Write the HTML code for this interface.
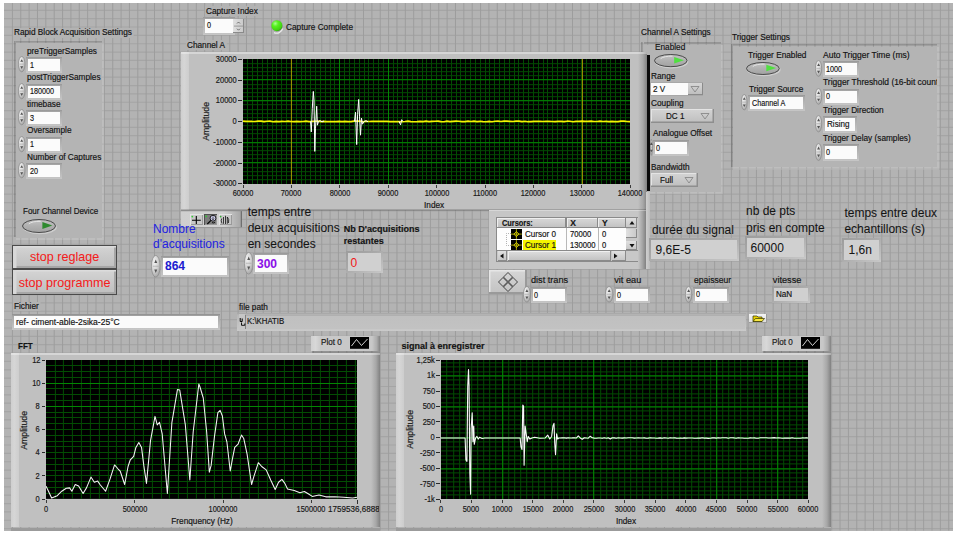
<!DOCTYPE html>
<html><head><meta charset="utf-8"><style>
html,body{margin:0;padding:0;background:#fff;width:956px;height:534px;overflow:hidden;font-family:"Liberation Sans", sans-serif;}
div{-webkit-text-stroke:0.18px currentColor;}
.big{-webkit-text-stroke:0.05px currentColor !important;}
</style></head><body>
<div style="position:absolute;left:4.00px;top:3.00px;width:949.00px;height:527.60px;background:#b3b3b3;overflow:hidden"><svg width="949" height="527.6" style="position:absolute;left:0;top:0"><g stroke="#a5a5a5" stroke-width="1.2"><line x1="0" y1="7.30" x2="949" y2="7.30"/><line x1="0" y1="15.66" x2="949" y2="15.66"/><line x1="0" y1="24.02" x2="949" y2="24.02"/><line x1="0" y1="32.38" x2="949" y2="32.38"/><line x1="0" y1="40.74" x2="949" y2="40.74"/><line x1="0" y1="49.10" x2="949" y2="49.10"/><line x1="0" y1="57.46" x2="949" y2="57.46"/><line x1="0" y1="65.82" x2="949" y2="65.82"/><line x1="0" y1="74.18" x2="949" y2="74.18"/><line x1="0" y1="82.54" x2="949" y2="82.54"/><line x1="0" y1="90.90" x2="949" y2="90.90"/><line x1="0" y1="99.26" x2="949" y2="99.26"/><line x1="0" y1="107.62" x2="949" y2="107.62"/><line x1="0" y1="115.98" x2="949" y2="115.98"/><line x1="0" y1="124.34" x2="949" y2="124.34"/><line x1="0" y1="132.70" x2="949" y2="132.70"/><line x1="0" y1="141.06" x2="949" y2="141.06"/><line x1="0" y1="149.42" x2="949" y2="149.42"/><line x1="0" y1="157.78" x2="949" y2="157.78"/><line x1="0" y1="166.14" x2="949" y2="166.14"/><line x1="0" y1="174.50" x2="949" y2="174.50"/><line x1="0" y1="182.86" x2="949" y2="182.86"/><line x1="0" y1="191.22" x2="949" y2="191.22"/><line x1="0" y1="199.58" x2="949" y2="199.58"/><line x1="0" y1="207.94" x2="949" y2="207.94"/><line x1="0" y1="216.30" x2="949" y2="216.30"/><line x1="0" y1="224.66" x2="949" y2="224.66"/><line x1="0" y1="233.02" x2="949" y2="233.02"/><line x1="0" y1="241.38" x2="949" y2="241.38"/><line x1="0" y1="249.74" x2="949" y2="249.74"/><line x1="0" y1="258.10" x2="949" y2="258.10"/><line x1="0" y1="266.46" x2="949" y2="266.46"/><line x1="0" y1="274.82" x2="949" y2="274.82"/><line x1="0" y1="283.18" x2="949" y2="283.18"/><line x1="0" y1="291.54" x2="949" y2="291.54"/><line x1="0" y1="299.90" x2="949" y2="299.90"/><line x1="0" y1="308.26" x2="949" y2="308.26"/><line x1="0" y1="316.62" x2="949" y2="316.62"/><line x1="0" y1="324.98" x2="949" y2="324.98"/><line x1="0" y1="333.34" x2="949" y2="333.34"/><line x1="0" y1="341.70" x2="949" y2="341.70"/><line x1="0" y1="350.06" x2="949" y2="350.06"/><line x1="0" y1="358.42" x2="949" y2="358.42"/><line x1="0" y1="366.78" x2="949" y2="366.78"/><line x1="0" y1="375.14" x2="949" y2="375.14"/><line x1="0" y1="383.50" x2="949" y2="383.50"/><line x1="0" y1="391.86" x2="949" y2="391.86"/><line x1="0" y1="400.22" x2="949" y2="400.22"/><line x1="0" y1="408.58" x2="949" y2="408.58"/><line x1="0" y1="416.94" x2="949" y2="416.94"/><line x1="0" y1="425.30" x2="949" y2="425.30"/><line x1="0" y1="433.66" x2="949" y2="433.66"/><line x1="0" y1="442.02" x2="949" y2="442.02"/><line x1="0" y1="450.38" x2="949" y2="450.38"/><line x1="0" y1="458.74" x2="949" y2="458.74"/><line x1="0" y1="467.10" x2="949" y2="467.10"/><line x1="0" y1="475.46" x2="949" y2="475.46"/><line x1="0" y1="483.82" x2="949" y2="483.82"/><line x1="0" y1="492.18" x2="949" y2="492.18"/><line x1="0" y1="500.54" x2="949" y2="500.54"/><line x1="0" y1="508.90" x2="949" y2="508.90"/><line x1="0" y1="517.26" x2="949" y2="517.26"/><line x1="0" y1="525.62" x2="949" y2="525.62"/></g><g stroke="#9d9d9d" stroke-width="1"><line x1="8.40" y1="0" x2="8.40" y2="527.6"/><line x1="16.76" y1="0" x2="16.76" y2="527.6"/><line x1="25.12" y1="0" x2="25.12" y2="527.6"/><line x1="33.48" y1="0" x2="33.48" y2="527.6"/><line x1="41.84" y1="0" x2="41.84" y2="527.6"/><line x1="50.20" y1="0" x2="50.20" y2="527.6"/><line x1="58.56" y1="0" x2="58.56" y2="527.6"/><line x1="66.92" y1="0" x2="66.92" y2="527.6"/><line x1="75.28" y1="0" x2="75.28" y2="527.6"/><line x1="83.64" y1="0" x2="83.64" y2="527.6"/><line x1="92.00" y1="0" x2="92.00" y2="527.6"/><line x1="100.36" y1="0" x2="100.36" y2="527.6"/><line x1="108.72" y1="0" x2="108.72" y2="527.6"/><line x1="117.08" y1="0" x2="117.08" y2="527.6"/><line x1="125.44" y1="0" x2="125.44" y2="527.6"/><line x1="133.80" y1="0" x2="133.80" y2="527.6"/><line x1="142.16" y1="0" x2="142.16" y2="527.6"/><line x1="150.52" y1="0" x2="150.52" y2="527.6"/><line x1="158.88" y1="0" x2="158.88" y2="527.6"/><line x1="167.24" y1="0" x2="167.24" y2="527.6"/><line x1="175.60" y1="0" x2="175.60" y2="527.6"/><line x1="183.96" y1="0" x2="183.96" y2="527.6"/><line x1="192.32" y1="0" x2="192.32" y2="527.6"/><line x1="200.68" y1="0" x2="200.68" y2="527.6"/><line x1="209.04" y1="0" x2="209.04" y2="527.6"/><line x1="217.40" y1="0" x2="217.40" y2="527.6"/><line x1="225.76" y1="0" x2="225.76" y2="527.6"/><line x1="234.12" y1="0" x2="234.12" y2="527.6"/><line x1="242.48" y1="0" x2="242.48" y2="527.6"/><line x1="250.84" y1="0" x2="250.84" y2="527.6"/><line x1="259.20" y1="0" x2="259.20" y2="527.6"/><line x1="267.56" y1="0" x2="267.56" y2="527.6"/><line x1="275.92" y1="0" x2="275.92" y2="527.6"/><line x1="284.28" y1="0" x2="284.28" y2="527.6"/><line x1="292.64" y1="0" x2="292.64" y2="527.6"/><line x1="301.00" y1="0" x2="301.00" y2="527.6"/><line x1="309.36" y1="0" x2="309.36" y2="527.6"/><line x1="317.72" y1="0" x2="317.72" y2="527.6"/><line x1="326.08" y1="0" x2="326.08" y2="527.6"/><line x1="334.44" y1="0" x2="334.44" y2="527.6"/><line x1="342.80" y1="0" x2="342.80" y2="527.6"/><line x1="351.16" y1="0" x2="351.16" y2="527.6"/><line x1="359.52" y1="0" x2="359.52" y2="527.6"/><line x1="367.88" y1="0" x2="367.88" y2="527.6"/><line x1="376.24" y1="0" x2="376.24" y2="527.6"/><line x1="384.60" y1="0" x2="384.60" y2="527.6"/><line x1="392.96" y1="0" x2="392.96" y2="527.6"/><line x1="401.32" y1="0" x2="401.32" y2="527.6"/><line x1="409.68" y1="0" x2="409.68" y2="527.6"/><line x1="418.04" y1="0" x2="418.04" y2="527.6"/><line x1="426.40" y1="0" x2="426.40" y2="527.6"/><line x1="434.76" y1="0" x2="434.76" y2="527.6"/><line x1="443.12" y1="0" x2="443.12" y2="527.6"/><line x1="451.48" y1="0" x2="451.48" y2="527.6"/><line x1="459.84" y1="0" x2="459.84" y2="527.6"/><line x1="468.20" y1="0" x2="468.20" y2="527.6"/><line x1="476.56" y1="0" x2="476.56" y2="527.6"/><line x1="484.92" y1="0" x2="484.92" y2="527.6"/><line x1="493.28" y1="0" x2="493.28" y2="527.6"/><line x1="501.64" y1="0" x2="501.64" y2="527.6"/><line x1="510.00" y1="0" x2="510.00" y2="527.6"/><line x1="518.36" y1="0" x2="518.36" y2="527.6"/><line x1="526.72" y1="0" x2="526.72" y2="527.6"/><line x1="535.08" y1="0" x2="535.08" y2="527.6"/><line x1="543.44" y1="0" x2="543.44" y2="527.6"/><line x1="551.80" y1="0" x2="551.80" y2="527.6"/><line x1="560.16" y1="0" x2="560.16" y2="527.6"/><line x1="568.52" y1="0" x2="568.52" y2="527.6"/><line x1="576.88" y1="0" x2="576.88" y2="527.6"/><line x1="585.24" y1="0" x2="585.24" y2="527.6"/><line x1="593.60" y1="0" x2="593.60" y2="527.6"/><line x1="601.96" y1="0" x2="601.96" y2="527.6"/><line x1="610.32" y1="0" x2="610.32" y2="527.6"/><line x1="618.68" y1="0" x2="618.68" y2="527.6"/><line x1="627.04" y1="0" x2="627.04" y2="527.6"/><line x1="635.40" y1="0" x2="635.40" y2="527.6"/><line x1="643.76" y1="0" x2="643.76" y2="527.6"/><line x1="652.12" y1="0" x2="652.12" y2="527.6"/><line x1="660.48" y1="0" x2="660.48" y2="527.6"/><line x1="668.84" y1="0" x2="668.84" y2="527.6"/><line x1="677.20" y1="0" x2="677.20" y2="527.6"/><line x1="685.56" y1="0" x2="685.56" y2="527.6"/><line x1="693.92" y1="0" x2="693.92" y2="527.6"/><line x1="702.28" y1="0" x2="702.28" y2="527.6"/><line x1="710.64" y1="0" x2="710.64" y2="527.6"/><line x1="719.00" y1="0" x2="719.00" y2="527.6"/><line x1="727.36" y1="0" x2="727.36" y2="527.6"/><line x1="735.72" y1="0" x2="735.72" y2="527.6"/><line x1="744.08" y1="0" x2="744.08" y2="527.6"/><line x1="752.44" y1="0" x2="752.44" y2="527.6"/><line x1="760.80" y1="0" x2="760.80" y2="527.6"/><line x1="769.16" y1="0" x2="769.16" y2="527.6"/><line x1="777.52" y1="0" x2="777.52" y2="527.6"/><line x1="785.88" y1="0" x2="785.88" y2="527.6"/><line x1="794.24" y1="0" x2="794.24" y2="527.6"/><line x1="802.60" y1="0" x2="802.60" y2="527.6"/><line x1="810.96" y1="0" x2="810.96" y2="527.6"/><line x1="819.32" y1="0" x2="819.32" y2="527.6"/><line x1="827.68" y1="0" x2="827.68" y2="527.6"/><line x1="836.04" y1="0" x2="836.04" y2="527.6"/><line x1="844.40" y1="0" x2="844.40" y2="527.6"/><line x1="852.76" y1="0" x2="852.76" y2="527.6"/><line x1="861.12" y1="0" x2="861.12" y2="527.6"/><line x1="869.48" y1="0" x2="869.48" y2="527.6"/><line x1="877.84" y1="0" x2="877.84" y2="527.6"/><line x1="886.20" y1="0" x2="886.20" y2="527.6"/><line x1="894.56" y1="0" x2="894.56" y2="527.6"/><line x1="902.92" y1="0" x2="902.92" y2="527.6"/><line x1="911.28" y1="0" x2="911.28" y2="527.6"/><line x1="919.64" y1="0" x2="919.64" y2="527.6"/><line x1="928.00" y1="0" x2="928.00" y2="527.6"/><line x1="936.36" y1="0" x2="936.36" y2="527.6"/><line x1="944.72" y1="0" x2="944.72" y2="527.6"/></g></svg></div><div style="position:absolute;left:205.70px;top:6.54px;font-size:8.7px;line-height:1;color:#141414;font-weight:400;white-space:nowrap;transform-origin:0 0;transform:scaleX(0.95);background:#b3b3b3;padding:0.5px 1.5px 0.5px 1px;margin:-0.5px 0 0 -1px;">Capture Index</div><div style="position:absolute;left:202.80px;top:16.70px;width:32.40px;height:18.20px;background:linear-gradient(to bottom,#969696,#a9a9a9 2px,#c6c6c6);"></div><div style="position:absolute;left:204.80px;top:18.70px;width:28.40px;height:14.20px;background:#fbfbfb"></div><div style="position:absolute;left:206.50px;top:21.43px;font-size:8.7px;line-height:1;color:#141414;font-weight:400;white-space:nowrap;transform-origin:0 0;transform:scaleX(0.83);">0</div><div style="position:absolute;left:233.20px;top:18.70px;width:10.70px;height:14.20px;background:linear-gradient(to right,#e0e0e0,#c8c8c8);box-shadow:inset -1px -1px 0 #8a8a8a"></div><svg style="position:absolute;left:233px;top:18.7px" width="11" height="15"><line x1="1" y1="7.1" x2="10" y2="7.1" stroke="#8a8a8a" stroke-width="0.8"/><path d="M4 4.5 L5.5 3 L7 4.5" stroke="#555" stroke-width="0.8" fill="none"/><path d="M4 9.7 L5.5 11.2 L7 9.7" stroke="#555" stroke-width="0.8" fill="none"/></svg><svg style="position:absolute;left:269px;top:18px" width="16" height="16"><defs><radialGradient id="led" cx="0.35" cy="0.3" r="0.75"><stop offset="0" stop-color="#a8ff90"/><stop offset="0.35" stop-color="#58f020"/><stop offset="0.85" stop-color="#40d010"/><stop offset="1" stop-color="#2a9010"/></radialGradient></defs><path d="M13.6 10.5 A6.2 6.2 0 0 1 5 14.6" stroke="#f0f0f0" stroke-width="1.3" fill="none" opacity="0.9"/><circle cx="7.9" cy="7.7" r="6.1" fill="#8a8a8a" opacity="0.35"/><circle cx="7.9" cy="7.7" r="5.5" fill="url(#led)"/></svg><div style="position:absolute;left:285.70px;top:22.54px;font-size:8.7px;line-height:1;color:#141414;font-weight:400;white-space:nowrap;transform-origin:0 0;transform:scaleX(0.95);">Capture Complete</div><div style="position:absolute;left:14.20px;top:28.34px;font-size:8.7px;line-height:1;color:#141414;font-weight:400;white-space:nowrap;transform-origin:0 0;transform:scaleX(0.95);background:#b3b3b3;padding:0.5px 1.5px 0.5px 1px;margin:-0.5px 0 0 -1px;">Rapid Block Acquisition Settings</div><div style="position:absolute;left:13.80px;top:40.80px;width:2.20px;height:196.70px;background:linear-gradient(to right,rgba(0,0,0,0.22),rgba(0,0,0,0.10))"></div><div style="position:absolute;left:16.00px;top:40.80px;width:85.50px;height:2.20px;background:linear-gradient(to bottom,rgba(0,0,0,0.2),rgba(0,0,0,0.08))"></div><div style="position:absolute;left:101.50px;top:43.00px;width:2.60px;height:197.10px;background:rgba(255,255,255,0.15)"></div><div style="position:absolute;left:16.00px;top:237.50px;width:85.50px;height:2.60px;background:rgba(255,255,255,0.15)"></div><div style="position:absolute;left:16.00px;top:43.00px;width:85.50px;height:194.50px;background:#b4b4b4"></div><div style="position:absolute;left:26.70px;top:46.64px;font-size:8.7px;line-height:1;color:#141414;font-weight:400;white-space:nowrap;transform-origin:0 0;transform:scaleX(0.95);">preTriggerSamples</div><svg style="position:absolute;left:18.00px;top:56.40px" width="8.4" height="17.2"><defs><radialGradient id="sp1" cx="0.35" cy="0.3" r="0.8"><stop offset="0" stop-color="#f2f2f2"/><stop offset="0.55" stop-color="#cfcfcf"/><stop offset="1" stop-color="#9c9c9c"/></radialGradient></defs><ellipse cx="3.70" cy="8.10" rx="3.30" ry="7.70" fill="url(#sp1)" stroke="#8a8a8a" stroke-width="0.7"/><path d="M2.20 5.83 L3.70 3.24 L5.20 5.83 Z M2.20 10.37 L3.70 12.96 L5.20 10.37 Z" fill="#555"/><line x1="1.48" y1="8.10" x2="5.92" y2="8.10" stroke="#a0a0a0" stroke-width="0.6"/></svg><div style="position:absolute;left:25.90px;top:57.40px;width:36.30px;height:15.70px;background:linear-gradient(to bottom,#969696,#a9a9a9 2px,#c6c6c6);"></div><div style="position:absolute;left:27.90px;top:59.40px;width:32.30px;height:11.70px;background:#fbfbfb"></div><div style="position:absolute;left:29.60px;top:60.88px;font-size:8.7px;line-height:1;color:#141414;font-weight:400;white-space:nowrap;transform-origin:0 0;transform:scaleX(0.83);">1</div><div style="position:absolute;left:26.70px;top:73.14px;font-size:8.7px;line-height:1;color:#141414;font-weight:400;white-space:nowrap;transform-origin:0 0;transform:scaleX(0.95);">postTriggerSamples</div><svg style="position:absolute;left:18.00px;top:82.90px" width="8.4" height="17.2"><defs><radialGradient id="sp2" cx="0.35" cy="0.3" r="0.8"><stop offset="0" stop-color="#f2f2f2"/><stop offset="0.55" stop-color="#cfcfcf"/><stop offset="1" stop-color="#9c9c9c"/></radialGradient></defs><ellipse cx="3.70" cy="8.10" rx="3.30" ry="7.70" fill="url(#sp2)" stroke="#8a8a8a" stroke-width="0.7"/><path d="M2.20 5.83 L3.70 3.24 L5.20 5.83 Z M2.20 10.37 L3.70 12.96 L5.20 10.37 Z" fill="#555"/><line x1="1.48" y1="8.10" x2="5.92" y2="8.10" stroke="#a0a0a0" stroke-width="0.6"/></svg><div style="position:absolute;left:25.90px;top:83.90px;width:36.30px;height:15.70px;background:linear-gradient(to bottom,#969696,#a9a9a9 2px,#c6c6c6);"></div><div style="position:absolute;left:27.90px;top:85.90px;width:32.30px;height:11.70px;background:#fbfbfb"></div><div style="position:absolute;left:29.60px;top:87.38px;font-size:8.7px;line-height:1;color:#141414;font-weight:400;white-space:nowrap;transform-origin:0 0;transform:scaleX(0.83);">180000</div><div style="position:absolute;left:26.70px;top:99.64px;font-size:8.7px;line-height:1;color:#141414;font-weight:400;white-space:nowrap;transform-origin:0 0;transform:scaleX(0.95);">timebase</div><svg style="position:absolute;left:18.00px;top:109.40px" width="8.4" height="17.2"><defs><radialGradient id="sp3" cx="0.35" cy="0.3" r="0.8"><stop offset="0" stop-color="#f2f2f2"/><stop offset="0.55" stop-color="#cfcfcf"/><stop offset="1" stop-color="#9c9c9c"/></radialGradient></defs><ellipse cx="3.70" cy="8.10" rx="3.30" ry="7.70" fill="url(#sp3)" stroke="#8a8a8a" stroke-width="0.7"/><path d="M2.20 5.83 L3.70 3.24 L5.20 5.83 Z M2.20 10.37 L3.70 12.96 L5.20 10.37 Z" fill="#555"/><line x1="1.48" y1="8.10" x2="5.92" y2="8.10" stroke="#a0a0a0" stroke-width="0.6"/></svg><div style="position:absolute;left:25.90px;top:110.40px;width:36.30px;height:15.70px;background:linear-gradient(to bottom,#969696,#a9a9a9 2px,#c6c6c6);"></div><div style="position:absolute;left:27.90px;top:112.40px;width:32.30px;height:11.70px;background:#fbfbfb"></div><div style="position:absolute;left:29.60px;top:113.88px;font-size:8.7px;line-height:1;color:#141414;font-weight:400;white-space:nowrap;transform-origin:0 0;transform:scaleX(0.83);">3</div><div style="position:absolute;left:26.70px;top:126.14px;font-size:8.7px;line-height:1;color:#141414;font-weight:400;white-space:nowrap;transform-origin:0 0;transform:scaleX(0.95);">Oversample</div><svg style="position:absolute;left:18.00px;top:135.90px" width="8.4" height="17.2"><defs><radialGradient id="sp4" cx="0.35" cy="0.3" r="0.8"><stop offset="0" stop-color="#f2f2f2"/><stop offset="0.55" stop-color="#cfcfcf"/><stop offset="1" stop-color="#9c9c9c"/></radialGradient></defs><ellipse cx="3.70" cy="8.10" rx="3.30" ry="7.70" fill="url(#sp4)" stroke="#8a8a8a" stroke-width="0.7"/><path d="M2.20 5.83 L3.70 3.24 L5.20 5.83 Z M2.20 10.37 L3.70 12.96 L5.20 10.37 Z" fill="#555"/><line x1="1.48" y1="8.10" x2="5.92" y2="8.10" stroke="#a0a0a0" stroke-width="0.6"/></svg><div style="position:absolute;left:25.90px;top:136.90px;width:36.30px;height:15.70px;background:linear-gradient(to bottom,#969696,#a9a9a9 2px,#c6c6c6);"></div><div style="position:absolute;left:27.90px;top:138.90px;width:32.30px;height:11.70px;background:#fbfbfb"></div><div style="position:absolute;left:29.60px;top:140.38px;font-size:8.7px;line-height:1;color:#141414;font-weight:400;white-space:nowrap;transform-origin:0 0;transform:scaleX(0.83);">1</div><div style="position:absolute;left:26.70px;top:152.64px;font-size:8.7px;line-height:1;color:#141414;font-weight:400;white-space:nowrap;transform-origin:0 0;transform:scaleX(0.95);">Number of Captures</div><svg style="position:absolute;left:18.00px;top:162.40px" width="8.4" height="17.2"><defs><radialGradient id="sp5" cx="0.35" cy="0.3" r="0.8"><stop offset="0" stop-color="#f2f2f2"/><stop offset="0.55" stop-color="#cfcfcf"/><stop offset="1" stop-color="#9c9c9c"/></radialGradient></defs><ellipse cx="3.70" cy="8.10" rx="3.30" ry="7.70" fill="url(#sp5)" stroke="#8a8a8a" stroke-width="0.7"/><path d="M2.20 5.83 L3.70 3.24 L5.20 5.83 Z M2.20 10.37 L3.70 12.96 L5.20 10.37 Z" fill="#555"/><line x1="1.48" y1="8.10" x2="5.92" y2="8.10" stroke="#a0a0a0" stroke-width="0.6"/></svg><div style="position:absolute;left:25.90px;top:163.40px;width:36.30px;height:15.70px;background:linear-gradient(to bottom,#969696,#a9a9a9 2px,#c6c6c6);"></div><div style="position:absolute;left:27.90px;top:165.40px;width:32.30px;height:11.70px;background:#fbfbfb"></div><div style="position:absolute;left:29.60px;top:166.88px;font-size:8.7px;line-height:1;color:#141414;font-weight:400;white-space:nowrap;transform-origin:0 0;transform:scaleX(0.83);">20</div><div style="position:absolute;left:22.50px;top:207.24px;font-size:8.7px;line-height:1;color:#141414;font-weight:400;white-space:nowrap;transform-origin:0 0;transform:scaleX(0.92);">Four Channel Device</div><div style="position:absolute;left:22.00px;top:218.50px;width:34.00px;height:14.00px;"><svg width="37.0" height="17.0" style="position:absolute;left:0;top:0;overflow:visible"><defs><linearGradient id="tg6" x1="0" y1="0" x2="0" y2="1"><stop offset="0" stop-color="#c4c4c4"/><stop offset="0.5" stop-color="#b0b0b0"/><stop offset="1" stop-color="#a2a2a2"/></linearGradient></defs><ellipse cx="17.8" cy="8.2" rx="17.0" ry="7.0" fill="#d8d8d8" opacity="0.7"/><ellipse cx="17.0" cy="7.0" rx="16.5" ry="6.5" fill="url(#tg6)" stroke="#3c3c3c" stroke-width="0.9"/><path d="M6.8 4.9 Q10.2 2.1 18.7 2.4" stroke="#e4e4e4" stroke-width="1" fill="none"/><path d="M20.4 3.1 L30.3 6.6 L20.4 10.1 Z" fill="#2e8a2e"/></svg></div><div style="position:absolute;left:12.20px;top:245.20px;width:104.80px;height:24.10px;box-sizing:border-box;border:1.3px solid #4a4a4a;background:linear-gradient(to bottom,#d4d4d4,#cacaca 45%,#bfbfbf);box-shadow:inset 3.5px 0 0 #d8d8d8, inset 0 1.5px 0 #dcdcdc, inset -2px -2px 0 #a6a6a6"></div><div class="big" style="position:absolute;left:-35.40px;width:200px;top:251.13px;font-size:12.6px;line-height:1;color:#f41c1c;font-weight:400;white-space:nowrap;text-align:center;transform-origin:50% 0;">stop reglage</div><div style="position:absolute;left:12.20px;top:269.30px;width:104.80px;height:25.40px;box-sizing:border-box;border:1.3px solid #4a4a4a;background:linear-gradient(to bottom,#d4d4d4,#cacaca 45%,#bfbfbf);box-shadow:inset 3.5px 0 0 #d8d8d8, inset 0 1.5px 0 #dcdcdc, inset -2px -2px 0 #a6a6a6"></div><div class="big" style="position:absolute;left:-35.40px;width:200px;top:277.33px;font-size:12.6px;line-height:1;color:#f41c1c;font-weight:400;white-space:nowrap;text-align:center;transform-origin:50% 0;">stop programme</div><div style="position:absolute;left:640.80px;top:28.34px;font-size:8.7px;line-height:1;color:#141414;font-weight:400;white-space:nowrap;transform-origin:0 0;transform:scaleX(0.95);">Channel A Settings</div><div style="position:absolute;left:641.30px;top:42.30px;width:2.20px;height:149.30px;background:linear-gradient(to right,rgba(0,0,0,0.22),rgba(0,0,0,0.10))"></div><div style="position:absolute;left:643.50px;top:42.30px;width:77.30px;height:2.20px;background:linear-gradient(to bottom,rgba(0,0,0,0.2),rgba(0,0,0,0.08))"></div><div style="position:absolute;left:720.80px;top:44.50px;width:2.60px;height:149.70px;background:rgba(255,255,255,0.15)"></div><div style="position:absolute;left:643.50px;top:191.60px;width:77.30px;height:2.60px;background:rgba(255,255,255,0.15)"></div><div style="position:absolute;left:643.50px;top:44.50px;width:77.30px;height:147.10px;background:#b4b4b4"></div><div style="position:absolute;left:654.70px;top:43.34px;font-size:8.7px;line-height:1;color:#141414;font-weight:400;white-space:nowrap;transform-origin:0 0;transform:scaleX(0.95);">Enabled</div><div style="position:absolute;left:654.00px;top:54.40px;width:33.60px;height:13.20px;"><svg width="36.6" height="16.2" style="position:absolute;left:0;top:0;overflow:visible"><defs><linearGradient id="tg7" x1="0" y1="0" x2="0" y2="1"><stop offset="0" stop-color="#c4c4c4"/><stop offset="0.5" stop-color="#b0b0b0"/><stop offset="1" stop-color="#a2a2a2"/></linearGradient></defs><ellipse cx="17.6" cy="7.8" rx="16.8" ry="6.6" fill="#d8d8d8" opacity="0.7"/><ellipse cx="16.8" cy="6.6" rx="16.3" ry="6.1" fill="url(#tg7)" stroke="#3c3c3c" stroke-width="0.9"/><path d="M6.7 4.6 Q10.1 2.0 18.5 2.2" stroke="#e4e4e4" stroke-width="1" fill="none"/><path d="M20.2 2.9 L29.9 6.2 L20.2 9.5 Z" fill="#50e040"/></svg></div><div style="position:absolute;left:651.00px;top:71.74px;font-size:8.7px;line-height:1;color:#141414;font-weight:400;white-space:nowrap;transform-origin:0 0;transform:scaleX(0.95);">Range</div><div style="position:absolute;left:650.00px;top:82.00px;width:52.60px;height:13.50px;background:#a8a8a8"></div><div style="position:absolute;left:651.00px;top:83.00px;width:36.60px;height:11.90px;background:#fbfbfb"></div><div style="position:absolute;left:687.60px;top:83.00px;width:15.00px;height:11.90px;background:linear-gradient(to bottom,#d6d6d6,#bdbdbd);box-shadow:inset -1px -1px 0 #8a8a8a"></div><div style="position:absolute;left:653.00px;top:84.64px;font-size:8.7px;line-height:1;color:#141414;font-weight:400;white-space:nowrap;transform-origin:0 0;transform:scaleX(0.93);">2 V</div><svg style="position:absolute;left:690.2px;top:85.0px" width="10" height="8"><path d="M1 1.5 L9 1.5 L5 7 Z" fill="none" stroke="#808080" stroke-width="0.8"/></svg><div style="position:absolute;left:650.60px;top:99.24px;font-size:8.7px;line-height:1;color:#141414;font-weight:400;white-space:nowrap;transform-origin:0 0;transform:scaleX(0.95);">Coupling</div><div style="position:absolute;left:650.60px;top:109.00px;width:63.10px;height:14.10px;background:linear-gradient(to bottom,#d4d4d4,#bebebe);box-shadow:inset -1.5px -1.5px 0 #8e8e8e, inset 1px 1px 0 #e4e4e4"></div><div style="position:absolute;left:666.00px;top:112.14px;font-size:8.7px;line-height:1;color:#141414;font-weight:400;white-space:nowrap;transform-origin:0 0;transform:scaleX(0.93);">DC 1</div><svg style="position:absolute;left:699.5px;top:112.0px" width="10" height="8"><path d="M1 1.5 L9 1.5 L5 7 Z" fill="none" stroke="#808080" stroke-width="0.8"/></svg><div style="position:absolute;left:653.20px;top:129.24px;font-size:8.7px;line-height:1;color:#141414;font-weight:400;white-space:nowrap;transform-origin:0 0;transform:scaleX(0.95);">Analogue Offset</div><svg style="position:absolute;left:649.50px;top:138.80px" width="3.7" height="17.7"><defs><radialGradient id="sp8" cx="0.35" cy="0.3" r="0.8"><stop offset="0" stop-color="#f2f2f2"/><stop offset="0.55" stop-color="#cfcfcf"/><stop offset="1" stop-color="#9c9c9c"/></radialGradient></defs><ellipse cx="1.35" cy="8.35" rx="0.95" ry="7.95" fill="url(#sp8)" stroke="#8a8a8a" stroke-width="0.7"/><path d="M-0.15 6.01 L1.35 3.34 L2.85 6.01 Z M-0.15 10.69 L1.35 13.36 L2.85 10.69 Z" fill="#555"/><line x1="0.54" y1="8.35" x2="2.16" y2="8.35" stroke="#a0a0a0" stroke-width="0.6"/></svg><div style="position:absolute;left:652.70px;top:139.80px;width:36.20px;height:16.20px;background:linear-gradient(to bottom,#969696,#a9a9a9 2px,#c6c6c6);"></div><div style="position:absolute;left:654.70px;top:141.80px;width:32.20px;height:12.20px;background:#fbfbfb"></div><div style="position:absolute;left:656.00px;top:143.53px;font-size:8.7px;line-height:1;color:#141414;font-weight:400;white-space:nowrap;transform-origin:0 0;transform:scaleX(0.83);">0</div><div style="position:absolute;left:650.60px;top:162.54px;font-size:8.7px;line-height:1;color:#141414;font-weight:400;white-space:nowrap;transform-origin:0 0;transform:scaleX(0.95);">Bandwidth</div><div style="position:absolute;left:650.60px;top:172.70px;width:47.20px;height:14.10px;background:linear-gradient(to bottom,#d4d4d4,#bebebe);box-shadow:inset -1.5px -1.5px 0 #8e8e8e, inset 1px 1px 0 #e4e4e4"></div><div style="position:absolute;left:659.50px;top:175.64px;font-size:8.7px;line-height:1;color:#141414;font-weight:400;white-space:nowrap;transform-origin:0 0;transform:scaleX(0.93);">Full</div><svg style="position:absolute;left:683.5px;top:176.0px" width="10" height="8"><path d="M1 1.5 L9 1.5 L5 7 Z" fill="none" stroke="#808080" stroke-width="0.8"/></svg><div style="position:absolute;left:731.70px;top:32.84px;font-size:8.7px;line-height:1;color:#141414;font-weight:400;white-space:nowrap;transform-origin:0 0;transform:scaleX(0.95);">Trigger Settings</div><div style="position:absolute;left:730.80px;top:44.30px;width:2.20px;height:123.10px;background:linear-gradient(to right,rgba(0,0,0,0.22),rgba(0,0,0,0.10))"></div><div style="position:absolute;left:733.00px;top:44.30px;width:203.50px;height:2.20px;background:linear-gradient(to bottom,rgba(0,0,0,0.2),rgba(0,0,0,0.08))"></div><div style="position:absolute;left:936.50px;top:46.50px;width:2.60px;height:123.50px;background:rgba(255,255,255,0.15)"></div><div style="position:absolute;left:733.00px;top:167.40px;width:203.50px;height:2.60px;background:rgba(255,255,255,0.15)"></div><div style="position:absolute;left:733.00px;top:46.50px;width:203.50px;height:120.90px;background:#b4b4b4"></div><div style="position:absolute;left:747.80px;top:50.54px;font-size:8.7px;line-height:1;color:#141414;font-weight:400;white-space:nowrap;transform-origin:0 0;transform:scaleX(0.95);">Trigger Enabled</div><div style="position:absolute;left:746.00px;top:61.80px;width:33.80px;height:12.90px;"><svg width="36.8" height="15.9" style="position:absolute;left:0;top:0;overflow:visible"><defs><linearGradient id="tg9" x1="0" y1="0" x2="0" y2="1"><stop offset="0" stop-color="#c4c4c4"/><stop offset="0.5" stop-color="#b0b0b0"/><stop offset="1" stop-color="#a2a2a2"/></linearGradient></defs><ellipse cx="17.7" cy="7.7" rx="16.9" ry="6.5" fill="#d8d8d8" opacity="0.7"/><ellipse cx="16.9" cy="6.5" rx="16.4" ry="6.0" fill="url(#tg9)" stroke="#3c3c3c" stroke-width="0.9"/><path d="M6.8 4.5 Q10.1 1.9 18.6 2.2" stroke="#e4e4e4" stroke-width="1" fill="none"/><path d="M20.3 2.8 L30.1 6.1 L20.3 9.3 Z" fill="#50e040"/></svg></div><div style="position:absolute;left:748.60px;top:84.74px;font-size:8.7px;line-height:1;color:#141414;font-weight:400;white-space:nowrap;transform-origin:0 0;transform:scaleX(0.95);">Trigger Source</div><svg style="position:absolute;left:741.00px;top:94.20px" width="7.5" height="17.3"><defs><radialGradient id="sp10" cx="0.35" cy="0.3" r="0.8"><stop offset="0" stop-color="#f2f2f2"/><stop offset="0.55" stop-color="#cfcfcf"/><stop offset="1" stop-color="#9c9c9c"/></radialGradient></defs><ellipse cx="3.25" cy="8.15" rx="2.85" ry="7.75" fill="url(#sp10)" stroke="#8a8a8a" stroke-width="0.7"/><path d="M1.75 5.87 L3.25 3.26 L4.75 5.87 Z M1.75 10.43 L3.25 13.04 L4.75 10.43 Z" fill="#555"/><line x1="1.30" y1="8.15" x2="5.20" y2="8.15" stroke="#a0a0a0" stroke-width="0.6"/></svg><div style="position:absolute;left:748.00px;top:95.20px;width:57.40px;height:15.80px;background:linear-gradient(to bottom,#969696,#a9a9a9 2px,#c6c6c6);"></div><div style="position:absolute;left:750.00px;top:97.20px;width:53.40px;height:11.80px;background:#fbfbfb"></div><div style="position:absolute;left:751.50px;top:98.73px;font-size:8.7px;line-height:1;color:#141414;font-weight:400;white-space:nowrap;transform-origin:0 0;transform:scaleX(0.83);">Channel A</div><div style="position:absolute;left:823.30px;top:50.54px;font-size:8.7px;line-height:1;color:#141414;font-weight:400;white-space:nowrap;transform-origin:0 0;transform:scaleX(0.98);">Auto Trigger Time (ms)</div><svg style="position:absolute;left:815.20px;top:60.00px" width="8.1" height="17.8"><defs><radialGradient id="sp11" cx="0.35" cy="0.3" r="0.8"><stop offset="0" stop-color="#f2f2f2"/><stop offset="0.55" stop-color="#cfcfcf"/><stop offset="1" stop-color="#9c9c9c"/></radialGradient></defs><ellipse cx="3.55" cy="8.40" rx="3.15" ry="8.00" fill="url(#sp11)" stroke="#8a8a8a" stroke-width="0.7"/><path d="M2.05 6.05 L3.55 3.36 L5.05 6.05 Z M2.05 10.75 L3.55 13.44 L5.05 10.75 Z" fill="#555"/><line x1="1.42" y1="8.40" x2="5.68" y2="8.40" stroke="#a0a0a0" stroke-width="0.6"/></svg><div style="position:absolute;left:822.80px;top:61.00px;width:36.00px;height:16.30px;background:linear-gradient(to bottom,#969696,#a9a9a9 2px,#c6c6c6);"></div><div style="position:absolute;left:824.80px;top:63.00px;width:32.00px;height:12.30px;background:#fbfbfb"></div><div style="position:absolute;left:826.00px;top:64.78px;font-size:8.7px;line-height:1;color:#141414;font-weight:400;white-space:nowrap;transform-origin:0 0;transform:scaleX(0.83);">1000</div><div style="position:absolute;left:800.00px;top:70.00px;width:136.50px;height:25.00px;overflow:hidden"><div style="position:absolute;left:23.30px;top:8.14px;font-size:8.7px;line-height:1;color:#141414;font-weight:400;white-space:nowrap;transform-origin:0 0;transform:scaleX(0.97);">Trigger Threshold (16-bit count)</div></div><svg style="position:absolute;left:815.20px;top:87.60px" width="8.1" height="17.7"><defs><radialGradient id="sp12" cx="0.35" cy="0.3" r="0.8"><stop offset="0" stop-color="#f2f2f2"/><stop offset="0.55" stop-color="#cfcfcf"/><stop offset="1" stop-color="#9c9c9c"/></radialGradient></defs><ellipse cx="3.55" cy="8.35" rx="3.15" ry="7.95" fill="url(#sp12)" stroke="#8a8a8a" stroke-width="0.7"/><path d="M2.05 6.01 L3.55 3.34 L5.05 6.01 Z M2.05 10.69 L3.55 13.36 L5.05 10.69 Z" fill="#555"/><line x1="1.42" y1="8.35" x2="5.68" y2="8.35" stroke="#a0a0a0" stroke-width="0.6"/></svg><div style="position:absolute;left:822.80px;top:88.60px;width:36.00px;height:16.20px;background:linear-gradient(to bottom,#969696,#a9a9a9 2px,#c6c6c6);"></div><div style="position:absolute;left:824.80px;top:90.60px;width:32.00px;height:12.20px;background:#fbfbfb"></div><div style="position:absolute;left:826.00px;top:92.33px;font-size:8.7px;line-height:1;color:#141414;font-weight:400;white-space:nowrap;transform-origin:0 0;transform:scaleX(0.83);">0</div><div style="position:absolute;left:823.30px;top:106.24px;font-size:8.7px;line-height:1;color:#141414;font-weight:400;white-space:nowrap;transform-origin:0 0;transform:scaleX(0.95);">Trigger Direction</div><svg style="position:absolute;left:815.20px;top:115.00px" width="8.1" height="18.3"><defs><radialGradient id="sp13" cx="0.35" cy="0.3" r="0.8"><stop offset="0" stop-color="#f2f2f2"/><stop offset="0.55" stop-color="#cfcfcf"/><stop offset="1" stop-color="#9c9c9c"/></radialGradient></defs><ellipse cx="3.55" cy="8.65" rx="3.15" ry="8.25" fill="url(#sp13)" stroke="#8a8a8a" stroke-width="0.7"/><path d="M2.05 6.23 L3.55 3.46 L5.05 6.23 Z M2.05 11.07 L3.55 13.84 L5.05 11.07 Z" fill="#555"/><line x1="1.42" y1="8.65" x2="5.68" y2="8.65" stroke="#a0a0a0" stroke-width="0.6"/></svg><div style="position:absolute;left:822.80px;top:116.00px;width:34.20px;height:16.80px;background:linear-gradient(to bottom,#969696,#a9a9a9 2px,#c6c6c6)"></div><div style="position:absolute;left:824.80px;top:118.00px;width:30.20px;height:12.80px;background:#fbfbfb"></div><div style="position:absolute;left:826.50px;top:120.44px;font-size:8.7px;line-height:1;color:#141414;font-weight:400;white-space:nowrap;transform-origin:0 0;transform:scaleX(0.93);">Rising</div><div style="position:absolute;left:823.30px;top:134.14px;font-size:8.7px;line-height:1;color:#141414;font-weight:400;white-space:nowrap;transform-origin:0 0;transform:scaleX(0.95);">Trigger Delay (samples)</div><svg style="position:absolute;left:815.20px;top:142.70px" width="8.1" height="18.9"><defs><radialGradient id="sp14" cx="0.35" cy="0.3" r="0.8"><stop offset="0" stop-color="#f2f2f2"/><stop offset="0.55" stop-color="#cfcfcf"/><stop offset="1" stop-color="#9c9c9c"/></radialGradient></defs><ellipse cx="3.55" cy="8.95" rx="3.15" ry="8.55" fill="url(#sp14)" stroke="#8a8a8a" stroke-width="0.7"/><path d="M2.05 6.44 L3.55 3.58 L5.05 6.44 Z M2.05 11.46 L3.55 14.32 L5.05 11.46 Z" fill="#555"/><line x1="1.42" y1="8.95" x2="5.68" y2="8.95" stroke="#a0a0a0" stroke-width="0.6"/></svg><div style="position:absolute;left:822.80px;top:143.70px;width:36.00px;height:17.40px;background:linear-gradient(to bottom,#969696,#a9a9a9 2px,#c6c6c6);"></div><div style="position:absolute;left:824.80px;top:145.70px;width:32.00px;height:13.40px;background:#fbfbfb"></div><div style="position:absolute;left:826.00px;top:148.03px;font-size:8.7px;line-height:1;color:#141414;font-weight:400;white-space:nowrap;transform-origin:0 0;transform:scaleX(0.83);">0</div><div style="position:absolute;left:186.60px;top:40.64px;font-size:8.7px;line-height:1;color:#141414;font-weight:400;white-space:nowrap;transform-origin:0 0;transform:scaleX(0.95);background:#b3b3b3;padding:0.5px 1.5px 0.5px 1px;margin:-0.5px 0 0 -1px;">Channel A</div><div style="position:absolute;left:180.60px;top:52.00px;width:466.20px;height:158.00px;background:#c0c0c0;"></div><div style="position:absolute;left:180.60px;top:52.00px;width:8.00px;height:158.00px;background:linear-gradient(to right,#cfcfcf,#d6d6d6 40%,#cdcdcd)"></div><div style="position:absolute;left:637.80px;top:52.00px;width:9.00px;height:158.00px;background:linear-gradient(to right,rgba(0,0,0,0),rgba(0,0,0,0.13) 55%,rgba(0,0,0,0.33))"></div><div style="position:absolute;left:180.60px;top:52.00px;width:466.20px;height:1.50px;background:rgba(255,255,255,0.35)"></div><div style="position:absolute;left:180.60px;top:209.00px;width:466.20px;height:2.00px;background:rgba(0,0,0,0.16)"></div><div style="position:absolute;left:647.10px;top:55.10px;width:2.90px;height:136.40px;background:#0a0a0a"></div><svg style="position:absolute;left:243.00px;top:58.80px" width="387.30" height="125.00"><rect x="0" y="0" width="387.30" height="125.00" fill="#000"/><g stroke="#034c03" stroke-width="1"><line x1="4.50" y1="0" x2="4.50" y2="125.00"/><line x1="9.50" y1="0" x2="9.50" y2="125.00"/><line x1="14.50" y1="0" x2="14.50" y2="125.00"/><line x1="19.50" y1="0" x2="19.50" y2="125.00"/><line x1="24.50" y1="0" x2="24.50" y2="125.00"/><line x1="29.50" y1="0" x2="29.50" y2="125.00"/><line x1="33.50" y1="0" x2="33.50" y2="125.00"/><line x1="38.50" y1="0" x2="38.50" y2="125.00"/><line x1="43.50" y1="0" x2="43.50" y2="125.00"/><line x1="48.50" y1="0" x2="48.50" y2="125.00"/><line x1="53.50" y1="0" x2="53.50" y2="125.00"/><line x1="58.50" y1="0" x2="58.50" y2="125.00"/><line x1="62.50" y1="0" x2="62.50" y2="125.00"/><line x1="67.50" y1="0" x2="67.50" y2="125.00"/><line x1="72.50" y1="0" x2="72.50" y2="125.00"/><line x1="77.50" y1="0" x2="77.50" y2="125.00"/><line x1="82.50" y1="0" x2="82.50" y2="125.00"/><line x1="87.50" y1="0" x2="87.50" y2="125.00"/><line x1="91.50" y1="0" x2="91.50" y2="125.00"/><line x1="96.50" y1="0" x2="96.50" y2="125.00"/><line x1="101.50" y1="0" x2="101.50" y2="125.00"/><line x1="106.50" y1="0" x2="106.50" y2="125.00"/><line x1="111.50" y1="0" x2="111.50" y2="125.00"/><line x1="116.50" y1="0" x2="116.50" y2="125.00"/><line x1="121.50" y1="0" x2="121.50" y2="125.00"/><line x1="125.50" y1="0" x2="125.50" y2="125.00"/><line x1="130.50" y1="0" x2="130.50" y2="125.00"/><line x1="135.50" y1="0" x2="135.50" y2="125.00"/><line x1="140.50" y1="0" x2="140.50" y2="125.00"/><line x1="145.50" y1="0" x2="145.50" y2="125.00"/><line x1="150.50" y1="0" x2="150.50" y2="125.00"/><line x1="154.50" y1="0" x2="154.50" y2="125.00"/><line x1="159.50" y1="0" x2="159.50" y2="125.00"/><line x1="164.50" y1="0" x2="164.50" y2="125.00"/><line x1="169.50" y1="0" x2="169.50" y2="125.00"/><line x1="174.50" y1="0" x2="174.50" y2="125.00"/><line x1="179.50" y1="0" x2="179.50" y2="125.00"/><line x1="183.50" y1="0" x2="183.50" y2="125.00"/><line x1="188.50" y1="0" x2="188.50" y2="125.00"/><line x1="193.50" y1="0" x2="193.50" y2="125.00"/><line x1="198.50" y1="0" x2="198.50" y2="125.00"/><line x1="203.50" y1="0" x2="203.50" y2="125.00"/><line x1="208.50" y1="0" x2="208.50" y2="125.00"/><line x1="213.50" y1="0" x2="213.50" y2="125.00"/><line x1="217.50" y1="0" x2="217.50" y2="125.00"/><line x1="222.50" y1="0" x2="222.50" y2="125.00"/><line x1="227.50" y1="0" x2="227.50" y2="125.00"/><line x1="232.50" y1="0" x2="232.50" y2="125.00"/><line x1="237.50" y1="0" x2="237.50" y2="125.00"/><line x1="242.50" y1="0" x2="242.50" y2="125.00"/><line x1="246.50" y1="0" x2="246.50" y2="125.00"/><line x1="251.50" y1="0" x2="251.50" y2="125.00"/><line x1="256.50" y1="0" x2="256.50" y2="125.00"/><line x1="261.50" y1="0" x2="261.50" y2="125.00"/><line x1="266.50" y1="0" x2="266.50" y2="125.00"/><line x1="271.50" y1="0" x2="271.50" y2="125.00"/><line x1="275.50" y1="0" x2="275.50" y2="125.00"/><line x1="280.50" y1="0" x2="280.50" y2="125.00"/><line x1="285.50" y1="0" x2="285.50" y2="125.00"/><line x1="290.50" y1="0" x2="290.50" y2="125.00"/><line x1="295.50" y1="0" x2="295.50" y2="125.00"/><line x1="300.50" y1="0" x2="300.50" y2="125.00"/><line x1="304.50" y1="0" x2="304.50" y2="125.00"/><line x1="309.50" y1="0" x2="309.50" y2="125.00"/><line x1="314.50" y1="0" x2="314.50" y2="125.00"/><line x1="319.50" y1="0" x2="319.50" y2="125.00"/><line x1="324.50" y1="0" x2="324.50" y2="125.00"/><line x1="329.50" y1="0" x2="329.50" y2="125.00"/><line x1="334.50" y1="0" x2="334.50" y2="125.00"/><line x1="338.50" y1="0" x2="338.50" y2="125.00"/><line x1="343.50" y1="0" x2="343.50" y2="125.00"/><line x1="348.50" y1="0" x2="348.50" y2="125.00"/><line x1="353.50" y1="0" x2="353.50" y2="125.00"/><line x1="358.50" y1="0" x2="358.50" y2="125.00"/><line x1="363.50" y1="0" x2="363.50" y2="125.00"/><line x1="367.50" y1="0" x2="367.50" y2="125.00"/><line x1="372.50" y1="0" x2="372.50" y2="125.00"/><line x1="377.50" y1="0" x2="377.50" y2="125.00"/><line x1="382.50" y1="0" x2="382.50" y2="125.00"/><line x1="0" y1="4.70" x2="387.30" y2="4.70"/><line x1="0" y1="8.70" x2="387.30" y2="8.70"/><line x1="0" y1="12.70" x2="387.30" y2="12.70"/><line x1="0" y1="16.70" x2="387.30" y2="16.70"/><line x1="0" y1="20.70" x2="387.30" y2="20.70"/><line x1="0" y1="25.70" x2="387.30" y2="25.70"/><line x1="0" y1="29.70" x2="387.30" y2="29.70"/><line x1="0" y1="33.70" x2="387.30" y2="33.70"/><line x1="0" y1="37.70" x2="387.30" y2="37.70"/><line x1="0" y1="41.70" x2="387.30" y2="41.70"/><line x1="0" y1="45.70" x2="387.30" y2="45.70"/><line x1="0" y1="50.70" x2="387.30" y2="50.70"/><line x1="0" y1="54.70" x2="387.30" y2="54.70"/><line x1="0" y1="58.70" x2="387.30" y2="58.70"/><line x1="0" y1="62.70" x2="387.30" y2="62.70"/><line x1="0" y1="66.70" x2="387.30" y2="66.70"/><line x1="0" y1="70.70" x2="387.30" y2="70.70"/><line x1="0" y1="74.70" x2="387.30" y2="74.70"/><line x1="0" y1="79.70" x2="387.30" y2="79.70"/><line x1="0" y1="83.70" x2="387.30" y2="83.70"/><line x1="0" y1="87.70" x2="387.30" y2="87.70"/><line x1="0" y1="91.70" x2="387.30" y2="91.70"/><line x1="0" y1="95.70" x2="387.30" y2="95.70"/><line x1="0" y1="99.70" x2="387.30" y2="99.70"/><line x1="0" y1="103.70" x2="387.30" y2="103.70"/><line x1="0" y1="108.70" x2="387.30" y2="108.70"/><line x1="0" y1="112.70" x2="387.30" y2="112.70"/><line x1="0" y1="116.70" x2="387.30" y2="116.70"/><line x1="0" y1="120.70" x2="387.30" y2="120.70"/></g><g stroke="#038603" stroke-width="1"><line x1="96.50" y1="0" x2="96.50" y2="125.00"/><line x1="145.50" y1="0" x2="145.50" y2="125.00"/><line x1="0" y1="20.70" x2="387.30" y2="20.70"/><line x1="0" y1="41.70" x2="387.30" y2="41.70"/><line x1="0" y1="62.70" x2="387.30" y2="62.70"/><line x1="0" y1="83.70" x2="387.30" y2="83.70"/><line x1="0" y1="103.70" x2="387.30" y2="103.70"/></g><line x1="48.40" y1="0" x2="48.40" y2="125.00" stroke="#a89a00" stroke-width="1"/><line x1="339.40" y1="0" x2="339.40" y2="125.00" stroke="#a89a00" stroke-width="1"/><polyline points="0.00,62.22 3.00,62.43 6.00,62.31 9.00,62.47 12.00,62.49 15.00,62.10 18.00,62.06 21.00,62.64 24.00,62.23 27.00,62.21 30.00,62.75 33.00,62.38 36.00,62.64 39.00,62.38 42.00,62.50 45.00,62.16 48.00,62.49 51.00,62.66 54.00,62.42 57.00,62.57 60.00,62.52 63.00,62.09 66.00,62.58 69.00,62.46 72.00,62.26 75.00,62.07 78.00,62.66 81.00,62.38 84.00,62.55 87.00,62.67 90.00,62.55 93.00,62.69 96.00,62.33 99.00,62.61 102.00,62.36 105.00,62.70 108.00,62.67 111.00,62.12 114.00,62.15 117.00,62.20 120.00,62.73 123.00,62.36 126.00,62.49 129.00,62.26 132.00,62.41 135.00,62.32 138.00,62.30 141.00,62.46 144.00,62.46 147.00,62.68 150.00,62.53 153.00,62.70 156.00,62.65 159.00,62.74 162.00,62.52 165.00,62.16 168.00,62.65 171.00,62.73 174.00,62.68 177.00,62.45 180.00,62.55 183.00,62.20 186.00,62.63 189.00,62.45 192.00,62.25 195.00,62.09 198.00,62.65 201.00,62.74 204.00,62.11 207.00,62.61 210.00,62.34 213.00,62.16 216.00,62.26 219.00,62.59 222.00,62.66 225.00,62.08 228.00,62.48 231.00,62.08 234.00,62.55 237.00,62.28 240.00,62.67 243.00,62.74 246.00,62.40 249.00,62.75 252.00,62.27 255.00,62.10 258.00,62.47 261.00,62.07 264.00,62.19 267.00,62.34 270.00,62.48 273.00,62.16 276.00,62.08 279.00,62.66 282.00,62.27 285.00,62.72 288.00,62.68 291.00,62.31 294.00,62.37 297.00,62.41 300.00,62.50 303.00,62.47 306.00,62.44 309.00,62.48 312.00,62.71 315.00,62.40 318.00,62.35 321.00,62.55 324.00,62.22 327.00,62.26 330.00,62.73 333.00,62.41 336.00,62.43 339.00,62.06 342.00,62.34 345.00,62.46 348.00,62.06 351.00,62.48 354.00,62.49 357.00,62.09 360.00,62.49 363.00,62.38 366.00,62.53 369.00,62.30 372.00,62.54 375.00,62.57 378.00,62.07 381.00,62.09 384.00,62.52 387.00,62.72" fill="none" stroke="#f4f400" stroke-width="1.7" stroke-linejoin="round"/><polyline points="67.50,62.40 68.30,72.90 69.30,49.20 70.30,32.40 71.00,41.20 71.80,92.40 72.50,69.20 73.70,47.20 74.40,66.20 75.50,62.40 77.00,61.60 79.00,62.80 81.00,62.00" fill="none" stroke="#ffffff" stroke-width="1" stroke-linejoin="round"/><polyline points="111.50,62.40 112.50,53.20 113.70,85.60 114.60,55.20 115.70,40.40 116.50,57.20 117.50,76.20 118.50,59.20 119.50,65.20 121.00,62.40 123.00,61.70 125.00,62.80" fill="none" stroke="#ffffff" stroke-width="1" stroke-linejoin="round"/><polyline points="156.00,62.40 157.60,65.80 158.60,60.70 160.00,62.40" fill="none" stroke="#ffffff" stroke-width="1" stroke-linejoin="round"/></svg><div style="position:absolute;right:719.10px;top:54.93px;font-size:8.5px;line-height:1;color:#181818;font-weight:400;white-space:nowrap;text-align:right;transform-origin:100% 0;transform:scaleX(0.88);">30000</div><div style="position:absolute;left:238.40px;top:58.75px;width:3.80px;height:0.90px;background:#2a2a2a"></div><div style="position:absolute;right:719.10px;top:75.68px;font-size:8.5px;line-height:1;color:#181818;font-weight:400;white-space:nowrap;text-align:right;transform-origin:100% 0;transform:scaleX(0.88);">20000</div><div style="position:absolute;left:238.40px;top:79.50px;width:3.80px;height:0.90px;background:#2a2a2a"></div><div style="position:absolute;right:719.10px;top:96.43px;font-size:8.5px;line-height:1;color:#181818;font-weight:400;white-space:nowrap;text-align:right;transform-origin:100% 0;transform:scaleX(0.88);">10000</div><div style="position:absolute;left:238.40px;top:100.25px;width:3.80px;height:0.90px;background:#2a2a2a"></div><div style="position:absolute;right:719.10px;top:117.18px;font-size:8.5px;line-height:1;color:#181818;font-weight:400;white-space:nowrap;text-align:right;transform-origin:100% 0;transform:scaleX(0.88);">0</div><div style="position:absolute;left:238.40px;top:121.00px;width:3.80px;height:0.90px;background:#2a2a2a"></div><div style="position:absolute;right:719.10px;top:137.93px;font-size:8.5px;line-height:1;color:#181818;font-weight:400;white-space:nowrap;text-align:right;transform-origin:100% 0;transform:scaleX(0.88);">-10000</div><div style="position:absolute;left:238.40px;top:141.75px;width:3.80px;height:0.90px;background:#2a2a2a"></div><div style="position:absolute;right:719.10px;top:158.68px;font-size:8.5px;line-height:1;color:#181818;font-weight:400;white-space:nowrap;text-align:right;transform-origin:100% 0;transform:scaleX(0.88);">-20000</div><div style="position:absolute;left:238.40px;top:162.50px;width:3.80px;height:0.90px;background:#2a2a2a"></div><div style="position:absolute;right:719.10px;top:179.43px;font-size:8.5px;line-height:1;color:#181818;font-weight:400;white-space:nowrap;text-align:right;transform-origin:100% 0;transform:scaleX(0.88);">-30000</div><div style="position:absolute;left:238.40px;top:183.25px;width:3.80px;height:0.90px;background:#2a2a2a"></div><div style="position:absolute;left:242.55px;top:184.50px;width:0.90px;height:3.50px;background:#3a3a3a"></div><div style="position:absolute;left:143.00px;width:200px;top:189.30px;font-size:8.5px;line-height:1;color:#181818;font-weight:400;white-space:nowrap;text-align:center;transform-origin:50% 0;transform:scaleX(0.87);">60000</div><div style="position:absolute;left:290.96px;top:184.50px;width:0.90px;height:3.50px;background:#3a3a3a"></div><div style="position:absolute;left:191.41px;width:200px;top:189.30px;font-size:8.5px;line-height:1;color:#181818;font-weight:400;white-space:nowrap;text-align:center;transform-origin:50% 0;transform:scaleX(0.87);">70000</div><div style="position:absolute;left:339.37px;top:184.50px;width:0.90px;height:3.50px;background:#3a3a3a"></div><div style="position:absolute;left:239.82px;width:200px;top:189.30px;font-size:8.5px;line-height:1;color:#181818;font-weight:400;white-space:nowrap;text-align:center;transform-origin:50% 0;transform:scaleX(0.87);">80000</div><div style="position:absolute;left:387.78px;top:184.50px;width:0.90px;height:3.50px;background:#3a3a3a"></div><div style="position:absolute;left:288.23px;width:200px;top:189.30px;font-size:8.5px;line-height:1;color:#181818;font-weight:400;white-space:nowrap;text-align:center;transform-origin:50% 0;transform:scaleX(0.87);">90000</div><div style="position:absolute;left:436.19px;top:184.50px;width:0.90px;height:3.50px;background:#3a3a3a"></div><div style="position:absolute;left:336.64px;width:200px;top:189.30px;font-size:8.5px;line-height:1;color:#181818;font-weight:400;white-space:nowrap;text-align:center;transform-origin:50% 0;transform:scaleX(0.87);">100000</div><div style="position:absolute;left:484.60px;top:184.50px;width:0.90px;height:3.50px;background:#3a3a3a"></div><div style="position:absolute;left:385.05px;width:200px;top:189.30px;font-size:8.5px;line-height:1;color:#181818;font-weight:400;white-space:nowrap;text-align:center;transform-origin:50% 0;transform:scaleX(0.87);">110000</div><div style="position:absolute;left:533.01px;top:184.50px;width:0.90px;height:3.50px;background:#3a3a3a"></div><div style="position:absolute;left:433.46px;width:200px;top:189.30px;font-size:8.5px;line-height:1;color:#181818;font-weight:400;white-space:nowrap;text-align:center;transform-origin:50% 0;transform:scaleX(0.87);">120000</div><div style="position:absolute;left:581.42px;top:184.50px;width:0.90px;height:3.50px;background:#3a3a3a"></div><div style="position:absolute;left:481.87px;width:200px;top:189.30px;font-size:8.5px;line-height:1;color:#181818;font-weight:400;white-space:nowrap;text-align:center;transform-origin:50% 0;transform:scaleX(0.87);">130000</div><div style="position:absolute;left:629.83px;top:184.50px;width:0.90px;height:3.50px;background:#3a3a3a"></div><div style="position:absolute;left:530.28px;width:200px;top:189.30px;font-size:8.5px;line-height:1;color:#181818;font-weight:400;white-space:nowrap;text-align:center;transform-origin:50% 0;transform:scaleX(0.87);">140000</div><div style="position:absolute;left:424.40px;top:201.44px;font-size:8.7px;line-height:1;color:#141414;font-weight:400;white-space:nowrap;transform-origin:0 0;transform:scaleX(0.95);">Index</div><div style="position:absolute;left:165.50px;top:116.95px;width:80px;height:8.7px;line-height:8.7px;font-size:8.7px;text-align:center;color:#181818;transform:rotate(-90deg) scaleX(1.0);white-space:nowrap">Amplitude</div><div style="position:absolute;left:181.00px;top:210.00px;width:60.50px;height:18.00px;background:linear-gradient(to right,#cfcfcf,#d2d2d2 70%,#a8a8a8 97%,#5a5a5a);box-shadow:inset 0 1.2px 0 #8e8e8e, inset 0 -1px 0 #9a9a9a"></div><div style="position:absolute;left:190.20px;top:214.10px;width:12.80px;height:10.70px;background:#c8c8c8;box-shadow:inset 1px 1px 0 #e4e4e4, inset -1px -1px 0 #9a9a9a"></div><div style="position:absolute;left:204.10px;top:214.10px;width:12.80px;height:10.70px;background:#7c7c7c;box-shadow:inset 1px 1px 0 #505050, inset -1px -1px 0 #9a9a9a"></div><div style="position:absolute;left:219.10px;top:214.10px;width:12.80px;height:10.70px;background:#c8c8c8;box-shadow:inset 1px 1px 0 #e4e4e4, inset -1px -1px 0 #9a9a9a"></div><svg style="position:absolute;left:190.2px;top:214.1px" width="42" height="11"><path d="M6.3 2 V10 M2 6.2 H10.8" stroke="#000" stroke-width="1.1"/><circle cx="2.3" cy="2.6" r="0.9" fill="#3c3"/><circle cx="23" cy="4.2" r="2.9" fill="#d4d4f4" stroke="#101010" stroke-width="0.9"/><path d="M23 2.5 V5.5 M21.8 4.6 L23 5.8 L24.2 4.6" stroke="#101010" stroke-width="0.7" fill="none"/><path d="M21 6.4 L17.3 10" stroke="#000" stroke-width="1.1"/><path d="M22 8.5 Q23.5 9.5 25 8.3" stroke="#000" stroke-width="0.8" fill="none"/><circle cx="16.2" cy="2.3" r="0.9" fill="#3c3"/><path d="M32 9.5 Q30.5 6.5 31.8 4.5 M33.5 9.8 V3 M35.5 10 V1.8 M37.3 9.8 V3 Q39.5 5 38.5 9" stroke="#101010" stroke-width="0.8" fill="none"/><circle cx="30.6" cy="2.6" r="0.9" fill="#3a3"/></svg><div style="position:absolute;left:17.70px;top:340.76px;font-size:9.5px;line-height:1;color:#141414;font-weight:700;white-space:nowrap;transform-origin:0 0;transform:scaleX(0.85);">FFT</div><div style="position:absolute;left:11.00px;top:353.20px;width:368.70px;height:174.30px;background:#c0c0c0;"></div><div style="position:absolute;left:11.00px;top:353.20px;width:8.00px;height:174.30px;background:linear-gradient(to right,#cfcfcf,#d6d6d6 40%,#cdcdcd)"></div><div style="position:absolute;left:370.70px;top:353.20px;width:9.00px;height:174.30px;background:linear-gradient(to right,rgba(0,0,0,0),rgba(0,0,0,0.13) 55%,rgba(0,0,0,0.33))"></div><div style="position:absolute;left:11.00px;top:353.20px;width:368.70px;height:1.50px;background:rgba(255,255,255,0.35)"></div><div style="position:absolute;left:11.00px;top:527.50px;width:368.70px;height:3.10px;background:#9b9b9b"></div><div style="position:absolute;left:311.70px;top:337.50px;width:68.50px;height:15.40px;background:rgba(0,0,0,0.18)"></div><div style="position:absolute;left:310.70px;top:336.00px;width:69.00px;height:15.40px;background:#c8c8c8"></div><div style="position:absolute;left:310.70px;top:336.00px;width:9.00px;height:15.40px;background:linear-gradient(to right,#d0d0d0,#d8d8d8 50%,#cbcbcb)"></div><div style="position:absolute;left:371.70px;top:336.00px;width:8.00px;height:15.40px;background:linear-gradient(to right,rgba(0,0,0,0),rgba(0,0,0,0.14) 60%,rgba(0,0,0,0.35))"></div><div style="position:absolute;left:321.40px;top:338.34px;font-size:8.7px;line-height:1;color:#181818;font-weight:400;white-space:nowrap;transform-origin:0 0;transform:scaleX(0.93);">Plot 0</div><svg style="position:absolute;left:350.00px;top:337.30px" width="19.3" height="11.8"><rect width="19.3" height="11.8" fill="#000"/><polyline points="1.5,9 6.5,2.5 11.5,8.5 17.5,2" fill="none" stroke="#e8e8e8" stroke-width="0.9"/></svg><svg style="position:absolute;left:46.10px;top:360.00px" width="311.40" height="138.90"><rect x="0" y="0" width="311.40" height="138.90" fill="#000"/><g stroke="#034c03" stroke-width="1"><line x1="9.40" y1="0" x2="9.40" y2="138.90"/><line x1="17.40" y1="0" x2="17.40" y2="138.90"/><line x1="26.40" y1="0" x2="26.40" y2="138.90"/><line x1="35.40" y1="0" x2="35.40" y2="138.90"/><line x1="44.40" y1="0" x2="44.40" y2="138.90"/><line x1="53.40" y1="0" x2="53.40" y2="138.90"/><line x1="62.40" y1="0" x2="62.40" y2="138.90"/><line x1="70.40" y1="0" x2="70.40" y2="138.90"/><line x1="79.40" y1="0" x2="79.40" y2="138.90"/><line x1="88.40" y1="0" x2="88.40" y2="138.90"/><line x1="97.40" y1="0" x2="97.40" y2="138.90"/><line x1="106.40" y1="0" x2="106.40" y2="138.90"/><line x1="115.40" y1="0" x2="115.40" y2="138.90"/><line x1="123.40" y1="0" x2="123.40" y2="138.90"/><line x1="132.40" y1="0" x2="132.40" y2="138.90"/><line x1="141.40" y1="0" x2="141.40" y2="138.90"/><line x1="150.40" y1="0" x2="150.40" y2="138.90"/><line x1="159.40" y1="0" x2="159.40" y2="138.90"/><line x1="168.40" y1="0" x2="168.40" y2="138.90"/><line x1="176.40" y1="0" x2="176.40" y2="138.90"/><line x1="185.40" y1="0" x2="185.40" y2="138.90"/><line x1="194.40" y1="0" x2="194.40" y2="138.90"/><line x1="203.40" y1="0" x2="203.40" y2="138.90"/><line x1="212.40" y1="0" x2="212.40" y2="138.90"/><line x1="221.40" y1="0" x2="221.40" y2="138.90"/><line x1="229.40" y1="0" x2="229.40" y2="138.90"/><line x1="238.40" y1="0" x2="238.40" y2="138.90"/><line x1="247.40" y1="0" x2="247.40" y2="138.90"/><line x1="256.40" y1="0" x2="256.40" y2="138.90"/><line x1="265.40" y1="0" x2="265.40" y2="138.90"/><line x1="274.40" y1="0" x2="274.40" y2="138.90"/><line x1="283.40" y1="0" x2="283.40" y2="138.90"/><line x1="291.40" y1="0" x2="291.40" y2="138.90"/><line x1="300.40" y1="0" x2="300.40" y2="138.90"/><line x1="309.40" y1="0" x2="309.40" y2="138.90"/><line x1="0" y1="133.50" x2="311.40" y2="133.50"/><line x1="0" y1="127.50" x2="311.40" y2="127.50"/><line x1="0" y1="121.50" x2="311.40" y2="121.50"/><line x1="0" y1="115.50" x2="311.40" y2="115.50"/><line x1="0" y1="110.50" x2="311.40" y2="110.50"/><line x1="0" y1="104.50" x2="311.40" y2="104.50"/><line x1="0" y1="98.50" x2="311.40" y2="98.50"/><line x1="0" y1="92.50" x2="311.40" y2="92.50"/><line x1="0" y1="86.50" x2="311.40" y2="86.50"/><line x1="0" y1="81.50" x2="311.40" y2="81.50"/><line x1="0" y1="75.50" x2="311.40" y2="75.50"/><line x1="0" y1="69.50" x2="311.40" y2="69.50"/><line x1="0" y1="63.50" x2="311.40" y2="63.50"/><line x1="0" y1="57.50" x2="311.40" y2="57.50"/><line x1="0" y1="52.50" x2="311.40" y2="52.50"/><line x1="0" y1="46.50" x2="311.40" y2="46.50"/><line x1="0" y1="40.50" x2="311.40" y2="40.50"/><line x1="0" y1="34.50" x2="311.40" y2="34.50"/><line x1="0" y1="28.50" x2="311.40" y2="28.50"/><line x1="0" y1="23.50" x2="311.40" y2="23.50"/><line x1="0" y1="17.50" x2="311.40" y2="17.50"/><line x1="0" y1="11.50" x2="311.40" y2="11.50"/><line x1="0" y1="5.50" x2="311.40" y2="5.50"/></g><g stroke="#038603" stroke-width="1"><line x1="0" y1="46.50" x2="311.40" y2="46.50"/><line x1="0" y1="23.50" x2="311.40" y2="23.50"/></g><polyline points="0.10,126.26 5.64,137.98 11.26,135.73 15.75,131.24 20.25,128.31 23.62,127.87 25.87,131.24 29.24,124.49 32.61,126.07 37.10,133.48 40.47,127.87 44.97,117.08 48.34,122.25 51.71,121.12 53.96,124.49 59.57,131.24 64.07,118.88 68.56,104.94 71.93,108.76 74.18,111.01 78.68,124.49 82.05,106.52 84.29,99.78 87.66,96.40 89.91,87.42 92.83,82.47 95.53,87.42 97.78,105.39 100.47,123.37 104.52,80.67 109.01,56.40 111.26,64.94 113.51,62.25 116.20,73.93 121.37,133.48 125.87,62.70 131.48,29.44 133.73,30.11 139.35,64.94 143.84,120.00 147.21,71.69 152.83,24.04 153.90,26.74 157.27,37.98 160.64,71.69 163.34,112.13 165.14,105.39 168.51,76.18 171.88,52.58 174.12,50.34 176.37,55.96 178.62,73.93 180.87,81.80 184.24,111.01 186.48,98.65 188.73,87.42 192.10,84.04 195.47,75.06 197.72,78.43 201.09,94.16 205.59,124.49 207.83,116.63 212.33,102.70 215.70,106.52 220.19,109.89 224.69,120.00 229.18,129.44 232.55,122.25 235.92,119.33 238.84,123.37 241.54,128.99 248.28,130.56 253.90,132.81 258.39,131.46 261.77,133.48 266.26,136.40 273.00,135.06 279.74,136.85 288.73,136.85 297.72,137.30 306.71,137.98 313.45,136.85" fill="none" stroke="#f4f4f4" stroke-width="1.05" stroke-linejoin="round"/></svg><div style="position:absolute;right:916.00px;top:355.77px;font-size:8.5px;line-height:1;color:#181818;font-weight:400;white-space:nowrap;text-align:right;transform-origin:100% 0;transform:scaleX(0.88);">12</div><div style="position:absolute;left:41.50px;top:359.59px;width:3.80px;height:0.90px;background:#2a2a2a"></div><div style="position:absolute;right:916.00px;top:378.93px;font-size:8.5px;line-height:1;color:#181818;font-weight:400;white-space:nowrap;text-align:right;transform-origin:100% 0;transform:scaleX(0.88);">10</div><div style="position:absolute;left:41.50px;top:382.75px;width:3.80px;height:0.90px;background:#2a2a2a"></div><div style="position:absolute;right:916.00px;top:402.09px;font-size:8.5px;line-height:1;color:#181818;font-weight:400;white-space:nowrap;text-align:right;transform-origin:100% 0;transform:scaleX(0.88);">8</div><div style="position:absolute;left:41.50px;top:405.91px;width:3.80px;height:0.90px;background:#2a2a2a"></div><div style="position:absolute;right:916.00px;top:425.25px;font-size:8.5px;line-height:1;color:#181818;font-weight:400;white-space:nowrap;text-align:right;transform-origin:100% 0;transform:scaleX(0.88);">6</div><div style="position:absolute;left:41.50px;top:429.07px;width:3.80px;height:0.90px;background:#2a2a2a"></div><div style="position:absolute;right:916.00px;top:448.41px;font-size:8.5px;line-height:1;color:#181818;font-weight:400;white-space:nowrap;text-align:right;transform-origin:100% 0;transform:scaleX(0.88);">4</div><div style="position:absolute;left:41.50px;top:452.23px;width:3.80px;height:0.90px;background:#2a2a2a"></div><div style="position:absolute;right:916.00px;top:471.57px;font-size:8.5px;line-height:1;color:#181818;font-weight:400;white-space:nowrap;text-align:right;transform-origin:100% 0;transform:scaleX(0.88);">2</div><div style="position:absolute;left:41.50px;top:475.39px;width:3.80px;height:0.90px;background:#2a2a2a"></div><div style="position:absolute;right:916.00px;top:494.73px;font-size:8.5px;line-height:1;color:#181818;font-weight:400;white-space:nowrap;text-align:right;transform-origin:100% 0;transform:scaleX(0.88);">0</div><div style="position:absolute;left:41.50px;top:498.55px;width:3.80px;height:0.90px;background:#2a2a2a"></div><div style="position:absolute;left:45.75px;top:499.50px;width:0.90px;height:3.50px;background:#3a3a3a"></div><div style="position:absolute;left:-53.80px;width:200px;top:505.10px;font-size:8.5px;line-height:1;color:#181818;font-weight:400;white-space:nowrap;text-align:center;transform-origin:50% 0;transform:scaleX(0.87);">0</div><div style="position:absolute;left:134.13px;top:499.50px;width:0.90px;height:3.50px;background:#3a3a3a"></div><div style="position:absolute;left:34.58px;width:200px;top:505.10px;font-size:8.5px;line-height:1;color:#181818;font-weight:400;white-space:nowrap;text-align:center;transform-origin:50% 0;transform:scaleX(0.87);">500000</div><div style="position:absolute;left:222.51px;top:499.50px;width:0.90px;height:3.50px;background:#3a3a3a"></div><div style="position:absolute;left:122.96px;width:200px;top:505.10px;font-size:8.5px;line-height:1;color:#181818;font-weight:400;white-space:nowrap;text-align:center;transform-origin:50% 0;transform:scaleX(0.87);">1000000</div><div style="position:absolute;left:310.89px;top:499.50px;width:0.90px;height:3.50px;background:#3a3a3a"></div><div style="position:absolute;left:211.34px;width:200px;top:505.10px;font-size:8.5px;line-height:1;color:#181818;font-weight:400;white-space:nowrap;text-align:center;transform-origin:50% 0;transform:scaleX(0.87);">1500000</div><div style="position:absolute;left:357.00px;top:499.50px;width:1.10px;height:4.00px;background:#303030"></div><div style="position:absolute;left:300.00px;top:503.00px;width:79.40px;height:13.00px;overflow:hidden"><div style="position:absolute;left:28.00px;top:2.30px;font-size:8.5px;line-height:1;color:#181818;font-weight:400;white-space:nowrap;transform-origin:0 0;transform:scaleX(0.95);">1759536,68885</div></div><div style="position:absolute;left:102.00px;width:200px;top:517.04px;font-size:8.7px;line-height:1;color:#141414;font-weight:400;white-space:nowrap;text-align:center;transform-origin:50% 0;transform:scaleX(0.95);">Frenquency (Hz)</div><div style="position:absolute;left:-16.20px;top:425.65px;width:80px;height:8.7px;line-height:8.7px;font-size:8.7px;text-align:center;color:#181818;transform:rotate(-90deg) scaleX(1.0);white-space:nowrap">Amplitude</div><div style="position:absolute;left:401.40px;top:341.58px;font-size:9px;line-height:1;color:#141414;font-weight:700;white-space:nowrap;transform-origin:0 0;">signal à enregistrer</div><div style="position:absolute;left:395.60px;top:353.20px;width:435.00px;height:174.30px;background:#c0c0c0;"></div><div style="position:absolute;left:395.60px;top:353.20px;width:8.00px;height:174.30px;background:linear-gradient(to right,#cfcfcf,#d6d6d6 40%,#cdcdcd)"></div><div style="position:absolute;left:821.60px;top:353.20px;width:9.00px;height:174.30px;background:linear-gradient(to right,rgba(0,0,0,0),rgba(0,0,0,0.13) 55%,rgba(0,0,0,0.33))"></div><div style="position:absolute;left:395.60px;top:353.20px;width:435.00px;height:1.50px;background:rgba(255,255,255,0.35)"></div><div style="position:absolute;left:395.60px;top:527.50px;width:435.00px;height:3.10px;background:#9b9b9b"></div><div style="position:absolute;left:762.60px;top:337.50px;width:68.50px;height:15.40px;background:rgba(0,0,0,0.18)"></div><div style="position:absolute;left:761.60px;top:336.00px;width:69.00px;height:15.40px;background:#c8c8c8"></div><div style="position:absolute;left:761.60px;top:336.00px;width:9.00px;height:15.40px;background:linear-gradient(to right,#d0d0d0,#d8d8d8 50%,#cbcbcb)"></div><div style="position:absolute;left:822.60px;top:336.00px;width:8.00px;height:15.40px;background:linear-gradient(to right,rgba(0,0,0,0),rgba(0,0,0,0.14) 60%,rgba(0,0,0,0.35))"></div><div style="position:absolute;left:772.30px;top:338.34px;font-size:8.7px;line-height:1;color:#181818;font-weight:400;white-space:nowrap;transform-origin:0 0;transform:scaleX(0.93);">Plot 0</div><svg style="position:absolute;left:800.90px;top:337.30px" width="19.3" height="11.8"><rect width="19.3" height="11.8" fill="#000"/><polyline points="1.5,9 6.5,2.5 11.5,8.5 17.5,2" fill="none" stroke="#e8e8e8" stroke-width="0.9"/></svg><svg style="position:absolute;left:440.80px;top:359.60px" width="367.50" height="139.30"><rect x="0" y="0" width="367.50" height="139.30" fill="#000"/><g stroke="#034c03" stroke-width="1"><line x1="5.70" y1="0" x2="5.70" y2="139.30"/><line x1="12.70" y1="0" x2="12.70" y2="139.30"/><line x1="18.70" y1="0" x2="18.70" y2="139.30"/><line x1="24.70" y1="0" x2="24.70" y2="139.30"/><line x1="30.70" y1="0" x2="30.70" y2="139.30"/><line x1="36.70" y1="0" x2="36.70" y2="139.30"/><line x1="42.70" y1="0" x2="42.70" y2="139.30"/><line x1="48.70" y1="0" x2="48.70" y2="139.30"/><line x1="54.70" y1="0" x2="54.70" y2="139.30"/><line x1="61.70" y1="0" x2="61.70" y2="139.30"/><line x1="67.70" y1="0" x2="67.70" y2="139.30"/><line x1="73.70" y1="0" x2="73.70" y2="139.30"/><line x1="79.70" y1="0" x2="79.70" y2="139.30"/><line x1="85.70" y1="0" x2="85.70" y2="139.30"/><line x1="91.70" y1="0" x2="91.70" y2="139.30"/><line x1="97.70" y1="0" x2="97.70" y2="139.30"/><line x1="103.70" y1="0" x2="103.70" y2="139.30"/><line x1="110.70" y1="0" x2="110.70" y2="139.30"/><line x1="116.70" y1="0" x2="116.70" y2="139.30"/><line x1="122.70" y1="0" x2="122.70" y2="139.30"/><line x1="128.70" y1="0" x2="128.70" y2="139.30"/><line x1="134.70" y1="0" x2="134.70" y2="139.30"/><line x1="140.70" y1="0" x2="140.70" y2="139.30"/><line x1="146.70" y1="0" x2="146.70" y2="139.30"/><line x1="152.70" y1="0" x2="152.70" y2="139.30"/><line x1="159.70" y1="0" x2="159.70" y2="139.30"/><line x1="165.70" y1="0" x2="165.70" y2="139.30"/><line x1="171.70" y1="0" x2="171.70" y2="139.30"/><line x1="177.70" y1="0" x2="177.70" y2="139.30"/><line x1="183.70" y1="0" x2="183.70" y2="139.30"/><line x1="189.70" y1="0" x2="189.70" y2="139.30"/><line x1="195.70" y1="0" x2="195.70" y2="139.30"/><line x1="201.70" y1="0" x2="201.70" y2="139.30"/><line x1="208.70" y1="0" x2="208.70" y2="139.30"/><line x1="214.70" y1="0" x2="214.70" y2="139.30"/><line x1="220.70" y1="0" x2="220.70" y2="139.30"/><line x1="226.70" y1="0" x2="226.70" y2="139.30"/><line x1="232.70" y1="0" x2="232.70" y2="139.30"/><line x1="238.70" y1="0" x2="238.70" y2="139.30"/><line x1="244.70" y1="0" x2="244.70" y2="139.30"/><line x1="250.70" y1="0" x2="250.70" y2="139.30"/><line x1="257.70" y1="0" x2="257.70" y2="139.30"/><line x1="263.70" y1="0" x2="263.70" y2="139.30"/><line x1="269.70" y1="0" x2="269.70" y2="139.30"/><line x1="275.70" y1="0" x2="275.70" y2="139.30"/><line x1="281.70" y1="0" x2="281.70" y2="139.30"/><line x1="287.70" y1="0" x2="287.70" y2="139.30"/><line x1="293.70" y1="0" x2="293.70" y2="139.30"/><line x1="299.70" y1="0" x2="299.70" y2="139.30"/><line x1="306.70" y1="0" x2="306.70" y2="139.30"/><line x1="312.70" y1="0" x2="312.70" y2="139.30"/><line x1="318.70" y1="0" x2="318.70" y2="139.30"/><line x1="324.70" y1="0" x2="324.70" y2="139.30"/><line x1="330.70" y1="0" x2="330.70" y2="139.30"/><line x1="336.70" y1="0" x2="336.70" y2="139.30"/><line x1="342.70" y1="0" x2="342.70" y2="139.30"/><line x1="348.70" y1="0" x2="348.70" y2="139.30"/><line x1="355.70" y1="0" x2="355.70" y2="139.30"/><line x1="361.70" y1="0" x2="361.70" y2="139.30"/><line x1="0" y1="134.90" x2="367.50" y2="134.90"/><line x1="0" y1="130.90" x2="367.50" y2="130.90"/><line x1="0" y1="126.90" x2="367.50" y2="126.90"/><line x1="0" y1="121.90" x2="367.50" y2="121.90"/><line x1="0" y1="117.90" x2="367.50" y2="117.90"/><line x1="0" y1="112.90" x2="367.50" y2="112.90"/><line x1="0" y1="108.90" x2="367.50" y2="108.90"/><line x1="0" y1="103.90" x2="367.50" y2="103.90"/><line x1="0" y1="99.90" x2="367.50" y2="99.90"/><line x1="0" y1="95.90" x2="367.50" y2="95.90"/><line x1="0" y1="90.90" x2="367.50" y2="90.90"/><line x1="0" y1="86.90" x2="367.50" y2="86.90"/><line x1="0" y1="81.90" x2="367.50" y2="81.90"/><line x1="0" y1="77.90" x2="367.50" y2="77.90"/><line x1="0" y1="72.90" x2="367.50" y2="72.90"/><line x1="0" y1="68.90" x2="367.50" y2="68.90"/><line x1="0" y1="64.90" x2="367.50" y2="64.90"/><line x1="0" y1="59.90" x2="367.50" y2="59.90"/><line x1="0" y1="55.90" x2="367.50" y2="55.90"/><line x1="0" y1="50.90" x2="367.50" y2="50.90"/><line x1="0" y1="46.90" x2="367.50" y2="46.90"/><line x1="0" y1="42.90" x2="367.50" y2="42.90"/><line x1="0" y1="37.90" x2="367.50" y2="37.90"/><line x1="0" y1="33.90" x2="367.50" y2="33.90"/><line x1="0" y1="28.90" x2="367.50" y2="28.90"/><line x1="0" y1="24.90" x2="367.50" y2="24.90"/><line x1="0" y1="19.90" x2="367.50" y2="19.90"/><line x1="0" y1="15.90" x2="367.50" y2="15.90"/><line x1="0" y1="11.90" x2="367.50" y2="11.90"/><line x1="0" y1="6.90" x2="367.50" y2="6.90"/><line x1="0" y1="2.90" x2="367.50" y2="2.90"/></g><g stroke="#038603" stroke-width="1"><line x1="61.70" y1="0" x2="61.70" y2="139.30"/><line x1="152.70" y1="0" x2="152.70" y2="139.30"/><line x1="275.70" y1="0" x2="275.70" y2="139.30"/><line x1="336.70" y1="0" x2="336.70" y2="139.30"/><line x1="0" y1="15.90" x2="367.50" y2="15.90"/><line x1="0" y1="46.90" x2="367.50" y2="46.90"/><line x1="0" y1="77.90" x2="367.50" y2="77.90"/><line x1="0" y1="108.90" x2="367.50" y2="108.90"/></g><polyline points="-0.80,78.01 24.11,78.01 24.89,100.03 25.94,101.34 26.73,26.62 27.52,9.58 28.04,25.31 28.83,113.14 29.61,134.12 30.14,68.57 31.19,52.84 31.97,81.68 32.76,65.95 33.28,84.30 34.60,78.01 35.91,76.44 37.22,79.06 38.53,77.22 41.15,78.53 43.77,78.01 79.17,78.01 79.96,86.92 81.00,89.55 81.79,44.97 82.58,46.28 83.10,105.28 84.15,65.95 85.20,73.81 86.25,81.68 87.30,76.44 88.87,79.06 90.97,78.01 93.59,77.22 98.83,78.27 104.08,78.01 106.70,75.12 108.80,79.06 110.63,76.44 111.94,65.95 112.99,63.33 113.78,84.30 114.56,94.79 115.61,73.81 116.66,79.06 117.71,78.01 119.28,78.01 121.28,77.88 123.28,77.76 125.28,78.11 127.28,77.70 129.28,78.03 131.28,77.91 133.28,77.69 135.28,78.01 137.28,75.80 139.28,77.95 141.28,79.20 143.28,77.71 145.28,77.95 147.28,78.23 149.28,76.20 151.28,77.81 153.28,78.09 155.28,78.31 157.28,78.05 159.28,77.93 161.28,78.33 163.28,77.68 165.28,78.25 167.28,77.85 169.28,79.00 171.28,77.73 173.28,77.87 175.28,78.22 177.28,77.78 179.28,78.06 181.28,78.10 183.28,77.91 185.28,78.03 187.28,77.69 189.28,77.69 191.28,77.79 193.28,78.13 195.28,77.95 197.28,77.87 199.28,78.06 201.28,77.97 203.28,77.86 205.28,78.21 207.28,78.14 209.28,77.82 211.28,78.05 213.28,78.02 215.28,78.26 217.28,78.16 219.28,77.85 221.28,78.34 223.28,77.73 225.28,77.94 227.28,78.18 229.28,77.76 231.28,77.99 233.28,77.68 235.28,78.12 237.28,78.19 239.28,78.05 241.28,78.26 243.28,77.87 245.28,78.14 247.28,78.07 249.28,78.06 251.28,77.97 253.28,78.24 255.28,78.31 257.28,77.98 259.28,78.11 261.28,77.69 263.28,78.14 265.28,78.10 267.28,78.35 269.28,78.23 271.28,77.85 273.28,77.92 275.28,78.12 277.28,77.67 279.28,77.97 281.28,77.77 283.28,77.73 285.28,77.69 287.28,78.19 289.28,77.74 291.28,77.82 293.28,77.92 295.28,78.26 297.28,77.71 299.28,77.96 301.28,78.03 303.28,78.27 305.28,78.22 307.28,78.25 309.28,77.84 311.28,77.94 313.28,77.90 315.28,78.27 317.28,78.32 319.28,77.76 321.28,77.77 323.28,77.81 325.28,77.81 327.28,77.99 329.28,78.06 331.28,77.83 333.28,77.65 335.28,77.94 337.28,77.91 339.28,78.05 341.28,78.32 343.28,78.13 345.28,78.01 347.28,78.08 349.28,78.12 351.28,77.69 353.28,78.28 355.28,78.20 357.28,78.26 359.28,78.21 361.28,77.92 363.28,77.93 365.28,77.72 367.28,78.09 369.28,77.69" fill="none" stroke="#f8f8f8" stroke-width="1.1" stroke-linejoin="round"/></svg><div style="position:absolute;right:521.30px;top:355.74px;font-size:8.5px;line-height:1;color:#181818;font-weight:400;white-space:nowrap;text-align:right;transform-origin:100% 0;transform:scaleX(0.88);">1,25k</div><div style="position:absolute;left:436.20px;top:359.56px;width:3.80px;height:0.90px;background:#2a2a2a"></div><div style="position:absolute;right:521.30px;top:371.22px;font-size:8.5px;line-height:1;color:#181818;font-weight:400;white-space:nowrap;text-align:right;transform-origin:100% 0;transform:scaleX(0.88);">1k</div><div style="position:absolute;left:436.20px;top:375.04px;width:3.80px;height:0.90px;background:#2a2a2a"></div><div style="position:absolute;right:521.30px;top:386.70px;font-size:8.5px;line-height:1;color:#181818;font-weight:400;white-space:nowrap;text-align:right;transform-origin:100% 0;transform:scaleX(0.88);">750</div><div style="position:absolute;left:436.20px;top:390.52px;width:3.80px;height:0.90px;background:#2a2a2a"></div><div style="position:absolute;right:521.30px;top:402.17px;font-size:8.5px;line-height:1;color:#181818;font-weight:400;white-space:nowrap;text-align:right;transform-origin:100% 0;transform:scaleX(0.88);">500</div><div style="position:absolute;left:436.20px;top:405.99px;width:3.80px;height:0.90px;background:#2a2a2a"></div><div style="position:absolute;right:521.30px;top:417.65px;font-size:8.5px;line-height:1;color:#181818;font-weight:400;white-space:nowrap;text-align:right;transform-origin:100% 0;transform:scaleX(0.88);">250</div><div style="position:absolute;left:436.20px;top:421.47px;width:3.80px;height:0.90px;background:#2a2a2a"></div><div style="position:absolute;right:521.30px;top:433.13px;font-size:8.5px;line-height:1;color:#181818;font-weight:400;white-space:nowrap;text-align:right;transform-origin:100% 0;transform:scaleX(0.88);">0</div><div style="position:absolute;left:436.20px;top:436.95px;width:3.80px;height:0.90px;background:#2a2a2a"></div><div style="position:absolute;right:521.30px;top:448.61px;font-size:8.5px;line-height:1;color:#181818;font-weight:400;white-space:nowrap;text-align:right;transform-origin:100% 0;transform:scaleX(0.88);">-250</div><div style="position:absolute;left:436.20px;top:452.43px;width:3.80px;height:0.90px;background:#2a2a2a"></div><div style="position:absolute;right:521.30px;top:464.08px;font-size:8.5px;line-height:1;color:#181818;font-weight:400;white-space:nowrap;text-align:right;transform-origin:100% 0;transform:scaleX(0.88);">-500</div><div style="position:absolute;left:436.20px;top:467.91px;width:3.80px;height:0.90px;background:#2a2a2a"></div><div style="position:absolute;right:521.30px;top:479.56px;font-size:8.5px;line-height:1;color:#181818;font-weight:400;white-space:nowrap;text-align:right;transform-origin:100% 0;transform:scaleX(0.88);">-750</div><div style="position:absolute;left:436.20px;top:483.38px;width:3.80px;height:0.90px;background:#2a2a2a"></div><div style="position:absolute;right:521.30px;top:495.04px;font-size:8.5px;line-height:1;color:#181818;font-weight:400;white-space:nowrap;text-align:right;transform-origin:100% 0;transform:scaleX(0.88);">-1k</div><div style="position:absolute;left:436.20px;top:498.86px;width:3.80px;height:0.90px;background:#2a2a2a"></div><div style="position:absolute;left:440.35px;top:499.50px;width:0.90px;height:3.50px;background:#3a3a3a"></div><div style="position:absolute;left:340.80px;width:200px;top:505.10px;font-size:8.5px;line-height:1;color:#181818;font-weight:400;white-space:nowrap;text-align:center;transform-origin:50% 0;transform:scaleX(0.87);">0</div><div style="position:absolute;left:470.98px;top:499.50px;width:0.90px;height:3.50px;background:#3a3a3a"></div><div style="position:absolute;left:371.43px;width:200px;top:505.10px;font-size:8.5px;line-height:1;color:#181818;font-weight:400;white-space:nowrap;text-align:center;transform-origin:50% 0;transform:scaleX(0.87);">5000</div><div style="position:absolute;left:501.60px;top:499.50px;width:0.90px;height:3.50px;background:#3a3a3a"></div><div style="position:absolute;left:402.05px;width:200px;top:505.10px;font-size:8.5px;line-height:1;color:#181818;font-weight:400;white-space:nowrap;text-align:center;transform-origin:50% 0;transform:scaleX(0.87);">10000</div><div style="position:absolute;left:532.22px;top:499.50px;width:0.90px;height:3.50px;background:#3a3a3a"></div><div style="position:absolute;left:432.67px;width:200px;top:505.10px;font-size:8.5px;line-height:1;color:#181818;font-weight:400;white-space:nowrap;text-align:center;transform-origin:50% 0;transform:scaleX(0.87);">15000</div><div style="position:absolute;left:562.85px;top:499.50px;width:0.90px;height:3.50px;background:#3a3a3a"></div><div style="position:absolute;left:463.30px;width:200px;top:505.10px;font-size:8.5px;line-height:1;color:#181818;font-weight:400;white-space:nowrap;text-align:center;transform-origin:50% 0;transform:scaleX(0.87);">20000</div><div style="position:absolute;left:593.47px;top:499.50px;width:0.90px;height:3.50px;background:#3a3a3a"></div><div style="position:absolute;left:493.92px;width:200px;top:505.10px;font-size:8.5px;line-height:1;color:#181818;font-weight:400;white-space:nowrap;text-align:center;transform-origin:50% 0;transform:scaleX(0.87);">25000</div><div style="position:absolute;left:624.10px;top:499.50px;width:0.90px;height:3.50px;background:#3a3a3a"></div><div style="position:absolute;left:524.55px;width:200px;top:505.10px;font-size:8.5px;line-height:1;color:#181818;font-weight:400;white-space:nowrap;text-align:center;transform-origin:50% 0;transform:scaleX(0.87);">30000</div><div style="position:absolute;left:654.72px;top:499.50px;width:0.90px;height:3.50px;background:#3a3a3a"></div><div style="position:absolute;left:555.17px;width:200px;top:505.10px;font-size:8.5px;line-height:1;color:#181818;font-weight:400;white-space:nowrap;text-align:center;transform-origin:50% 0;transform:scaleX(0.87);">35000</div><div style="position:absolute;left:685.35px;top:499.50px;width:0.90px;height:3.50px;background:#3a3a3a"></div><div style="position:absolute;left:585.80px;width:200px;top:505.10px;font-size:8.5px;line-height:1;color:#181818;font-weight:400;white-space:nowrap;text-align:center;transform-origin:50% 0;transform:scaleX(0.87);">40000</div><div style="position:absolute;left:715.97px;top:499.50px;width:0.90px;height:3.50px;background:#3a3a3a"></div><div style="position:absolute;left:616.42px;width:200px;top:505.10px;font-size:8.5px;line-height:1;color:#181818;font-weight:400;white-space:nowrap;text-align:center;transform-origin:50% 0;transform:scaleX(0.87);">45000</div><div style="position:absolute;left:746.60px;top:499.50px;width:0.90px;height:3.50px;background:#3a3a3a"></div><div style="position:absolute;left:647.05px;width:200px;top:505.10px;font-size:8.5px;line-height:1;color:#181818;font-weight:400;white-space:nowrap;text-align:center;transform-origin:50% 0;transform:scaleX(0.87);">50000</div><div style="position:absolute;left:777.22px;top:499.50px;width:0.90px;height:3.50px;background:#3a3a3a"></div><div style="position:absolute;left:677.67px;width:200px;top:505.10px;font-size:8.5px;line-height:1;color:#181818;font-weight:400;white-space:nowrap;text-align:center;transform-origin:50% 0;transform:scaleX(0.87);">55000</div><div style="position:absolute;left:807.85px;top:499.50px;width:0.90px;height:3.50px;background:#3a3a3a"></div><div style="position:absolute;left:708.30px;width:200px;top:505.10px;font-size:8.5px;line-height:1;color:#181818;font-weight:400;white-space:nowrap;text-align:center;transform-origin:50% 0;transform:scaleX(0.87);">60000</div><div style="position:absolute;left:525.70px;width:200px;top:517.04px;font-size:8.7px;line-height:1;color:#141414;font-weight:400;white-space:nowrap;text-align:center;transform-origin:50% 0;transform:scaleX(0.95);">Index</div><div style="position:absolute;left:369.50px;top:424.65px;width:80px;height:8.7px;line-height:8.7px;font-size:8.7px;text-align:center;color:#181818;transform:rotate(-90deg) scaleX(1.0);white-space:nowrap">Amplitude</div><div class="big" style="position:absolute;left:153.00px;top:223.34px;font-size:12px;line-height:1;color:#2424e0;font-weight:400;white-space:nowrap;transform-origin:0 0;">Nombre</div><div class="big" style="position:absolute;left:153.00px;top:238.34px;font-size:12px;line-height:1;color:#2424e0;font-weight:400;white-space:nowrap;transform-origin:0 0;">d'acquisitions</div><svg style="position:absolute;left:151.30px;top:254.50px" width="10.5" height="23.5"><defs><radialGradient id="sp15" cx="0.35" cy="0.3" r="0.8"><stop offset="0" stop-color="#f2f2f2"/><stop offset="0.55" stop-color="#cfcfcf"/><stop offset="1" stop-color="#9c9c9c"/></radialGradient></defs><ellipse cx="4.75" cy="11.25" rx="4.35" ry="10.85" fill="url(#sp15)" stroke="#8a8a8a" stroke-width="0.7"/><path d="M3.25 8.10 L4.75 4.50 L6.25 8.10 Z M3.25 14.40 L4.75 18.00 L6.25 14.40 Z" fill="#555"/><line x1="1.90" y1="11.25" x2="7.60" y2="11.25" stroke="#a0a0a0" stroke-width="0.6"/></svg><div style="position:absolute;left:160.60px;top:255.50px;width:68.80px;height:21.40px;background:linear-gradient(to bottom,#969696,#a9a9a9 2px,#c6c6c6)"></div><div style="position:absolute;left:162.60px;top:257.50px;width:64.80px;height:17.40px;background:#fbfbfb"></div><div class="big" style="position:absolute;left:165.00px;top:260.34px;font-size:12px;line-height:1;color:#1c1cd0;font-weight:700;white-space:nowrap;transform-origin:0 0;">864</div><div class="big" style="position:absolute;left:247.70px;top:206.14px;font-size:12px;line-height:1;color:#141414;font-weight:400;white-space:nowrap;transform-origin:0 0;">temps entre</div><div class="big" style="position:absolute;left:247.70px;top:222.04px;font-size:12px;line-height:1;color:#141414;font-weight:400;white-space:nowrap;transform-origin:0 0;">deux acquisitions</div><div class="big" style="position:absolute;left:247.70px;top:237.54px;font-size:12px;line-height:1;color:#141414;font-weight:400;white-space:nowrap;transform-origin:0 0;">en secondes</div><svg style="position:absolute;left:244.40px;top:252.00px" width="10.4" height="23.5"><defs><radialGradient id="sp16" cx="0.35" cy="0.3" r="0.8"><stop offset="0" stop-color="#f2f2f2"/><stop offset="0.55" stop-color="#cfcfcf"/><stop offset="1" stop-color="#9c9c9c"/></radialGradient></defs><ellipse cx="4.70" cy="11.25" rx="4.30" ry="10.85" fill="url(#sp16)" stroke="#8a8a8a" stroke-width="0.7"/><path d="M3.20 8.10 L4.70 4.50 L6.20 8.10 Z M3.20 14.40 L4.70 18.00 L6.20 14.40 Z" fill="#555"/><line x1="1.88" y1="11.25" x2="7.52" y2="11.25" stroke="#a0a0a0" stroke-width="0.6"/></svg><div style="position:absolute;left:252.60px;top:252.80px;width:36.90px;height:21.40px;background:linear-gradient(to bottom,#969696,#a9a9a9 2px,#c6c6c6)"></div><div style="position:absolute;left:254.60px;top:254.80px;width:32.90px;height:17.40px;background:#fbfbfb"></div><div class="big" style="position:absolute;left:257.00px;top:257.84px;font-size:12px;line-height:1;color:#8a10e8;font-weight:700;white-space:nowrap;transform-origin:0 0;">300</div><div style="position:absolute;left:343.80px;top:225.28px;font-size:9px;line-height:1;color:#141414;font-weight:700;white-space:nowrap;transform-origin:0 0;">Nb D'acquisitions</div><div style="position:absolute;left:343.80px;top:237.08px;font-size:9px;line-height:1;color:#141414;font-weight:700;white-space:nowrap;transform-origin:0 0;">restantes</div><div style="position:absolute;left:346.20px;top:251.10px;width:37.20px;height:21.70px;background:linear-gradient(to bottom right,#9c9c9c,#a8a8a8 40%,#c8c8c8);"></div><div style="position:absolute;left:348.20px;top:253.10px;width:33.20px;height:17.70px;background:#d0d0d0"></div><div class="big" style="position:absolute;left:350.50px;top:256.64px;font-size:12px;line-height:1;color:#f01818;font-weight:400;white-space:nowrap;transform-origin:0 0;">0</div><div style="position:absolute;left:488.70px;top:209.70px;width:157.30px;height:59.00px;background:#c6c6c6"></div><div style="position:absolute;left:638.00px;top:209.70px;width:8.00px;height:59.00px;background:linear-gradient(to right,rgba(0,0,0,0),rgba(0,0,0,0.15) 50%,rgba(0,0,0,0.35))"></div><div style="position:absolute;left:646.00px;top:191.50px;width:4.30px;height:77.20px;background:linear-gradient(to right,#cfcfcf,#bdbdbd)"></div><div style="position:absolute;left:488.70px;top:209.70px;width:157.30px;height:1.30px;background:rgba(255,255,255,0.3)"></div><div style="position:absolute;left:496.20px;top:216.70px;width:141.50px;height:45.50px;background:#8a8a8a"></div><div style="position:absolute;left:497.20px;top:217.70px;width:68.80px;height:10.70px;background:linear-gradient(to bottom,#d8d8d8,#c0c0c0);box-shadow:inset -1px -1px 0 #8a8a8a, inset 1px 1px 0 #eeeeee"></div><div style="position:absolute;left:566.50px;top:217.70px;width:31.50px;height:10.70px;background:linear-gradient(to bottom,#d8d8d8,#c0c0c0);box-shadow:inset -1px -1px 0 #8a8a8a, inset 1px 1px 0 #eeeeee"></div><div style="position:absolute;left:598.30px;top:217.70px;width:27.50px;height:10.70px;background:linear-gradient(to bottom,#d8d8d8,#c0c0c0);box-shadow:inset -1px -1px 0 #8a8a8a, inset 1px 1px 0 #eeeeee"></div><div style="position:absolute;left:501.90px;top:218.80px;font-size:8.5px;line-height:1;color:#141414;font-weight:700;white-space:nowrap;transform-origin:0 0;transform:scaleX(0.87);">Cursors:</div><div style="position:absolute;left:570.20px;top:218.80px;font-size:8.5px;line-height:1;color:#141414;font-weight:700;white-space:nowrap;transform-origin:0 0;">X</div><div style="position:absolute;left:602.00px;top:218.80px;font-size:8.5px;line-height:1;color:#141414;font-weight:700;white-space:nowrap;transform-origin:0 0;">Y</div><div style="position:absolute;left:497.20px;top:228.40px;width:128.60px;height:22.10px;background:#fdfdfd"></div><div style="position:absolute;left:566.00px;top:228.40px;width:0.80px;height:22.10px;background:#b8b8b8"></div><div style="position:absolute;left:598.00px;top:228.40px;width:0.80px;height:22.10px;background:#b8b8b8"></div><div style="position:absolute;left:625.80px;top:217.70px;width:11.90px;height:32.80px;background:#c8c8c8"></div><div style="position:absolute;left:626.30px;top:218.00px;width:10.90px;height:9.50px;background:linear-gradient(to bottom,#e0e0e0,#c4c4c4);box-shadow:inset -1px -1px 0 #8a8a8a"></div><div style="position:absolute;left:626.30px;top:228.50px;width:10.90px;height:9.50px;background:linear-gradient(to right,#e0e0e0,#c8c8c8);box-shadow:inset -1px -1px 0 #8a8a8a"></div><div style="position:absolute;left:626.30px;top:240.50px;width:10.90px;height:9.70px;background:linear-gradient(to bottom,#e0e0e0,#c4c4c4);box-shadow:inset -1px -1px 0 #8a8a8a"></div><svg style="position:absolute;left:626px;top:218px" width="12" height="33"><path d="M3.5 6.5 L6 3 L8.5 6.5 Z" fill="#101010"/><path d="M3.5 26 L6 29.5 L8.5 26 Z" fill="#101010"/></svg><div style="position:absolute;left:497.20px;top:250.50px;width:140.50px;height:10.70px;background:#c8c8c8"></div><div style="position:absolute;left:497.70px;top:251.00px;width:9.80px;height:9.80px;background:linear-gradient(to bottom,#e0e0e0,#c4c4c4);box-shadow:inset -1px -1px 0 #8a8a8a"></div><div style="position:absolute;left:508.00px;top:251.00px;width:103.00px;height:9.80px;background:linear-gradient(to bottom,#dedede,#c0c0c0);box-shadow:inset -1px -1px 0 #8a8a8a, inset 1px 1px 0 #f0f0f0"></div><div style="position:absolute;left:612.00px;top:251.00px;width:13.50px;height:9.80px;background:linear-gradient(to bottom,#e0e0e0,#c4c4c4);box-shadow:inset -1px -1px 0 #8a8a8a"></div><svg style="position:absolute;left:497px;top:251px" width="129" height="10"><path d="M6.5 2.5 L3 5 L6.5 7.5 Z" fill="#101010"/><path d="M117 2.5 L120.5 5 L117 7.5 Z" fill="#101010"/></svg><div style="position:absolute;left:511.20px;top:229.30px;width:10.80px;height:10.20px;background:#000"></div><svg style="position:absolute;left:511.2px;top:229.3px" width="11" height="10.2"><path d="M5.4 0 V10.2 M0 5.1 H10.8" stroke="#e8e000" stroke-width="0.7"/><rect x="3.6" y="3.3" width="3.6" height="3.6" fill="none" stroke="#e8e000" stroke-width="0.8" transform="rotate(45 5.4 5.1)"/></svg><div style="position:absolute;left:524.70px;top:230.14px;font-size:8.7px;line-height:1;color:#141414;font-weight:400;white-space:nowrap;transform-origin:0 0;transform:scaleX(0.93);">Cursor 0</div><div style="position:absolute;left:570.20px;top:230.30px;font-size:8.5px;line-height:1;color:#141414;font-weight:400;white-space:nowrap;transform-origin:0 0;transform:scaleX(0.9);">70000</div><div style="position:absolute;left:602.00px;top:230.30px;font-size:8.5px;line-height:1;color:#141414;font-weight:400;white-space:nowrap;transform-origin:0 0;transform:scaleX(0.9);">0</div><div style="position:absolute;left:522.50px;top:239.60px;width:33.30px;height:10.40px;background:#f4f400"></div><div style="position:absolute;left:511.20px;top:240.30px;width:10.80px;height:10.20px;background:#000"></div><svg style="position:absolute;left:511.2px;top:240.3px" width="11" height="10.2"><path d="M5.4 0 V10.2 M0 5.1 H10.8" stroke="#e8e000" stroke-width="0.7"/><rect x="3.6" y="3.3" width="3.6" height="3.6" fill="none" stroke="#e8e000" stroke-width="0.8" transform="rotate(45 5.4 5.1)"/></svg><div style="position:absolute;left:524.70px;top:241.14px;font-size:8.7px;line-height:1;color:#141414;font-weight:400;white-space:nowrap;transform-origin:0 0;transform:scaleX(0.93);">Cursor 1</div><div style="position:absolute;left:570.20px;top:241.30px;font-size:8.5px;line-height:1;color:#141414;font-weight:400;white-space:nowrap;transform-origin:0 0;transform:scaleX(0.9);">130000</div><div style="position:absolute;left:602.00px;top:241.30px;font-size:8.5px;line-height:1;color:#141414;font-weight:400;white-space:nowrap;transform-origin:0 0;transform:scaleX(0.9);">0</div><svg style="position:absolute;left:504px;top:230px" width="8" height="20"><path d="M7 3.5 H2.5 V15.5 H7" fill="none" stroke="#909090" stroke-width="0.7" stroke-dasharray="1,1"/></svg><div style="position:absolute;left:488.70px;top:269.60px;width:38.30px;height:24.40px;background:linear-gradient(to bottom,#d6d6d6,#c2c2c2);box-shadow:inset -2px -2px 0 #9a9a9a, inset 1.5px 1.5px 0 #e6e6e6"></div><svg style="position:absolute;left:497px;top:271px" width="22" height="22"><g fill="none" stroke="#202020" stroke-width="0.8"><path d="M11 1.5 L15.5 6 L11 10.5 L6.5 6 Z"/><path d="M11 11.5 L15.5 16 L11 20.5 L6.5 16 Z"/><path d="M6 6.5 L10.5 11 L6 15.5 L1.5 11 Z"/><path d="M16 6.5 L20.5 11 L16 15.5 L11.5 11 Z"/></g></svg><div style="position:absolute;left:530.90px;top:275.51px;font-size:9.2px;line-height:1;color:#141414;font-weight:400;white-space:nowrap;transform-origin:0 0;">dist trans</div><svg style="position:absolute;left:522.50px;top:285.90px" width="8.8" height="17.5"><defs><radialGradient id="sp17" cx="0.35" cy="0.3" r="0.8"><stop offset="0" stop-color="#f2f2f2"/><stop offset="0.55" stop-color="#cfcfcf"/><stop offset="1" stop-color="#9c9c9c"/></radialGradient></defs><ellipse cx="3.90" cy="8.25" rx="3.50" ry="7.85" fill="url(#sp17)" stroke="#8a8a8a" stroke-width="0.7"/><path d="M2.40 5.94 L3.90 3.30 L5.40 5.94 Z M2.40 10.56 L3.90 13.20 L5.40 10.56 Z" fill="#555"/><line x1="1.56" y1="8.25" x2="6.24" y2="8.25" stroke="#a0a0a0" stroke-width="0.6"/></svg><div style="position:absolute;left:530.80px;top:286.90px;width:36.30px;height:16.00px;background:linear-gradient(to bottom,#969696,#a9a9a9 2px,#c6c6c6);"></div><div style="position:absolute;left:532.80px;top:288.90px;width:32.30px;height:12.00px;background:#fbfbfb"></div><div style="position:absolute;left:534.00px;top:290.53px;font-size:8.7px;line-height:1;color:#141414;font-weight:400;white-space:nowrap;transform-origin:0 0;transform:scaleX(0.83);">0</div><div style="position:absolute;left:614.20px;top:275.51px;font-size:9.2px;line-height:1;color:#141414;font-weight:400;white-space:nowrap;transform-origin:0 0;">vit eau</div><svg style="position:absolute;left:604.90px;top:285.90px" width="9.3" height="17.5"><defs><radialGradient id="sp18" cx="0.35" cy="0.3" r="0.8"><stop offset="0" stop-color="#f2f2f2"/><stop offset="0.55" stop-color="#cfcfcf"/><stop offset="1" stop-color="#9c9c9c"/></radialGradient></defs><ellipse cx="4.15" cy="8.25" rx="3.75" ry="7.85" fill="url(#sp18)" stroke="#8a8a8a" stroke-width="0.7"/><path d="M2.65 5.94 L4.15 3.30 L5.65 5.94 Z M2.65 10.56 L4.15 13.20 L5.65 10.56 Z" fill="#555"/><line x1="1.66" y1="8.25" x2="6.64" y2="8.25" stroke="#a0a0a0" stroke-width="0.6"/></svg><div style="position:absolute;left:613.70px;top:286.90px;width:36.30px;height:16.00px;background:linear-gradient(to bottom,#969696,#a9a9a9 2px,#c6c6c6);"></div><div style="position:absolute;left:615.70px;top:288.90px;width:32.30px;height:12.00px;background:#fbfbfb"></div><div style="position:absolute;left:617.00px;top:290.53px;font-size:8.7px;line-height:1;color:#141414;font-weight:400;white-space:nowrap;transform-origin:0 0;transform:scaleX(0.83);">0</div><div class="big" style="position:absolute;left:651.90px;top:223.54px;font-size:12px;line-height:1;color:#141414;font-weight:400;white-space:nowrap;transform-origin:0 0;">durée du signal</div><div style="position:absolute;left:649.30px;top:237.90px;width:89.50px;height:22.90px;background:linear-gradient(to bottom right,#9c9c9c,#a8a8a8 40%,#c8c8c8);"></div><div style="position:absolute;left:651.30px;top:239.90px;width:85.50px;height:18.90px;background:#d0d0d0"></div><div class="big" style="position:absolute;left:655.50px;top:243.84px;font-size:12px;line-height:1;color:#141414;font-weight:400;white-space:nowrap;transform-origin:0 0;">9,6E-5</div><div class="big" style="position:absolute;left:746.00px;top:205.44px;font-size:12px;line-height:1;color:#141414;font-weight:400;white-space:nowrap;transform-origin:0 0;">nb de pts</div><div class="big" style="position:absolute;left:746.00px;top:221.84px;font-size:12px;line-height:1;color:#141414;font-weight:400;white-space:nowrap;transform-origin:0 0;">pris en compte</div><div style="position:absolute;left:744.70px;top:235.80px;width:60.90px;height:23.00px;background:linear-gradient(to bottom right,#9c9c9c,#a8a8a8 40%,#c8c8c8);"></div><div style="position:absolute;left:746.70px;top:237.80px;width:56.90px;height:19.00px;background:#d0d0d0"></div><div class="big" style="position:absolute;left:750.50px;top:242.34px;font-size:12px;line-height:1;color:#141414;font-weight:400;white-space:nowrap;transform-origin:0 0;">60000</div><div class="big" style="position:absolute;left:844.40px;top:206.84px;font-size:12px;line-height:1;color:#141414;font-weight:400;white-space:nowrap;transform-origin:0 0;">temps entre deux</div><div class="big" style="position:absolute;left:844.40px;top:223.14px;font-size:12px;line-height:1;color:#141414;font-weight:400;white-space:nowrap;transform-origin:0 0;">echantillons (s)</div><div style="position:absolute;left:842.40px;top:238.00px;width:38.40px;height:23.90px;background:linear-gradient(to bottom right,#9c9c9c,#a8a8a8 40%,#c8c8c8);"></div><div style="position:absolute;left:844.40px;top:240.00px;width:34.40px;height:19.90px;background:#d0d0d0"></div><div class="big" style="position:absolute;left:848.50px;top:244.34px;font-size:12px;line-height:1;color:#141414;font-weight:400;white-space:nowrap;transform-origin:0 0;">1,6n</div><div style="position:absolute;left:694.00px;top:275.71px;font-size:9.2px;line-height:1;color:#141414;font-weight:400;white-space:nowrap;transform-origin:0 0;transform:scaleX(0.93);">epaisseur</div><svg style="position:absolute;left:684.90px;top:285.70px" width="8.2" height="17.8"><defs><radialGradient id="sp19" cx="0.35" cy="0.3" r="0.8"><stop offset="0" stop-color="#f2f2f2"/><stop offset="0.55" stop-color="#cfcfcf"/><stop offset="1" stop-color="#9c9c9c"/></radialGradient></defs><ellipse cx="3.60" cy="8.40" rx="3.20" ry="8.00" fill="url(#sp19)" stroke="#8a8a8a" stroke-width="0.7"/><path d="M2.10 6.05 L3.60 3.36 L5.10 6.05 Z M2.10 10.75 L3.60 13.44 L5.10 10.75 Z" fill="#555"/><line x1="1.44" y1="8.40" x2="5.76" y2="8.40" stroke="#a0a0a0" stroke-width="0.6"/></svg><div style="position:absolute;left:692.60px;top:286.70px;width:36.90px;height:16.30px;background:linear-gradient(to bottom,#969696,#a9a9a9 2px,#c6c6c6);"></div><div style="position:absolute;left:694.60px;top:288.70px;width:32.90px;height:12.30px;background:#fbfbfb"></div><div style="position:absolute;left:696.00px;top:290.48px;font-size:8.7px;line-height:1;color:#141414;font-weight:400;white-space:nowrap;transform-origin:0 0;transform:scaleX(0.83);">0</div><div style="position:absolute;left:772.80px;top:275.71px;font-size:9.2px;line-height:1;color:#141414;font-weight:400;white-space:nowrap;transform-origin:0 0;">vitesse</div><div style="position:absolute;left:771.60px;top:285.50px;width:38.40px;height:17.20px;background:linear-gradient(to bottom right,#9c9c9c,#a8a8a8 40%,#c8c8c8);"></div><div style="position:absolute;left:773.60px;top:287.50px;width:34.40px;height:13.20px;background:#d0d0d0"></div><div style="position:absolute;left:776.00px;top:290.14px;font-size:8.7px;line-height:1;color:#141414;font-weight:400;white-space:nowrap;transform-origin:0 0;transform:scaleX(0.93);">NaN</div><div style="position:absolute;left:13.60px;top:302.04px;font-size:8.7px;line-height:1;color:#141414;font-weight:400;white-space:nowrap;transform-origin:0 0;transform:scaleX(0.95);background:#b3b3b3;padding:0.5px 1.5px 0.5px 1px;margin:-0.5px 0 0 -1px;">Fichier</div><div style="position:absolute;left:11.60px;top:314.00px;width:208.80px;height:16.20px;background:linear-gradient(to bottom,#8e8e8e,#a6a6a6 2px,#c8c8c8)"></div><div style="position:absolute;left:13.60px;top:316.00px;width:204.80px;height:12.20px;background:#fbfbfb"></div><div style="position:absolute;left:15.70px;top:317.64px;font-size:8.7px;line-height:1;color:#141414;font-weight:400;white-space:nowrap;transform-origin:0 0;transform:scaleX(0.98);">ref- ciment-able-2sika-25°C</div><div style="position:absolute;left:238.60px;top:303.44px;font-size:8.7px;line-height:1;color:#141414;font-weight:400;white-space:nowrap;transform-origin:0 0;transform:scaleX(0.95);">file path</div><div style="position:absolute;left:237.00px;top:312.60px;width:509.30px;height:18.20px;background:linear-gradient(to bottom,#a4a4a4,#b8b8b8 2px,#cacaca)"></div><div style="position:absolute;left:238.50px;top:314.00px;width:6.50px;height:15.80px;background:#c6c6c6"></div><div style="position:absolute;left:245.00px;top:314.80px;width:499.80px;height:14.60px;background:linear-gradient(to bottom,#a8a8a8,#c0c0c0 1.5px,#c2c2c2)"></div><div style="position:absolute;left:245.00px;top:314.80px;width:0.90px;height:14.60px;background:#808080"></div><svg style="position:absolute;left:238.5px;top:317px" width="7" height="10"><path d="M1.2 1 V4.5 H3.2 M3.2 1.5 V4.5" stroke="#000" stroke-width="1" fill="none"/><path d="M2.5 5.5 V8.3 H5.8 V6.5" stroke="#000" stroke-width="0.9" fill="none"/></svg><div style="position:absolute;left:246.60px;top:316.64px;font-size:8.7px;line-height:1;color:#141414;font-weight:400;white-space:nowrap;transform-origin:0 0;transform:scaleX(0.9);">K:\KHATIB</div><div style="position:absolute;left:748.50px;top:313.80px;width:18.90px;height:9.00px;background:linear-gradient(to bottom,#f4f4f4,#dcdcdc);box-shadow:inset -1px -1px 0 #9a9a9a"></div><svg style="position:absolute;left:751px;top:314px" width="15" height="9"><path d="M2 2 H6 L7 3 H11 V7.5 H2 Z" fill="#e8d000" stroke="#303000" stroke-width="0.7"/><path d="M2 7.5 L4.5 4.5 H13.5 L11 7.5 Z" fill="#f8e840" stroke="#303000" stroke-width="0.7"/></svg>
</body></html>
